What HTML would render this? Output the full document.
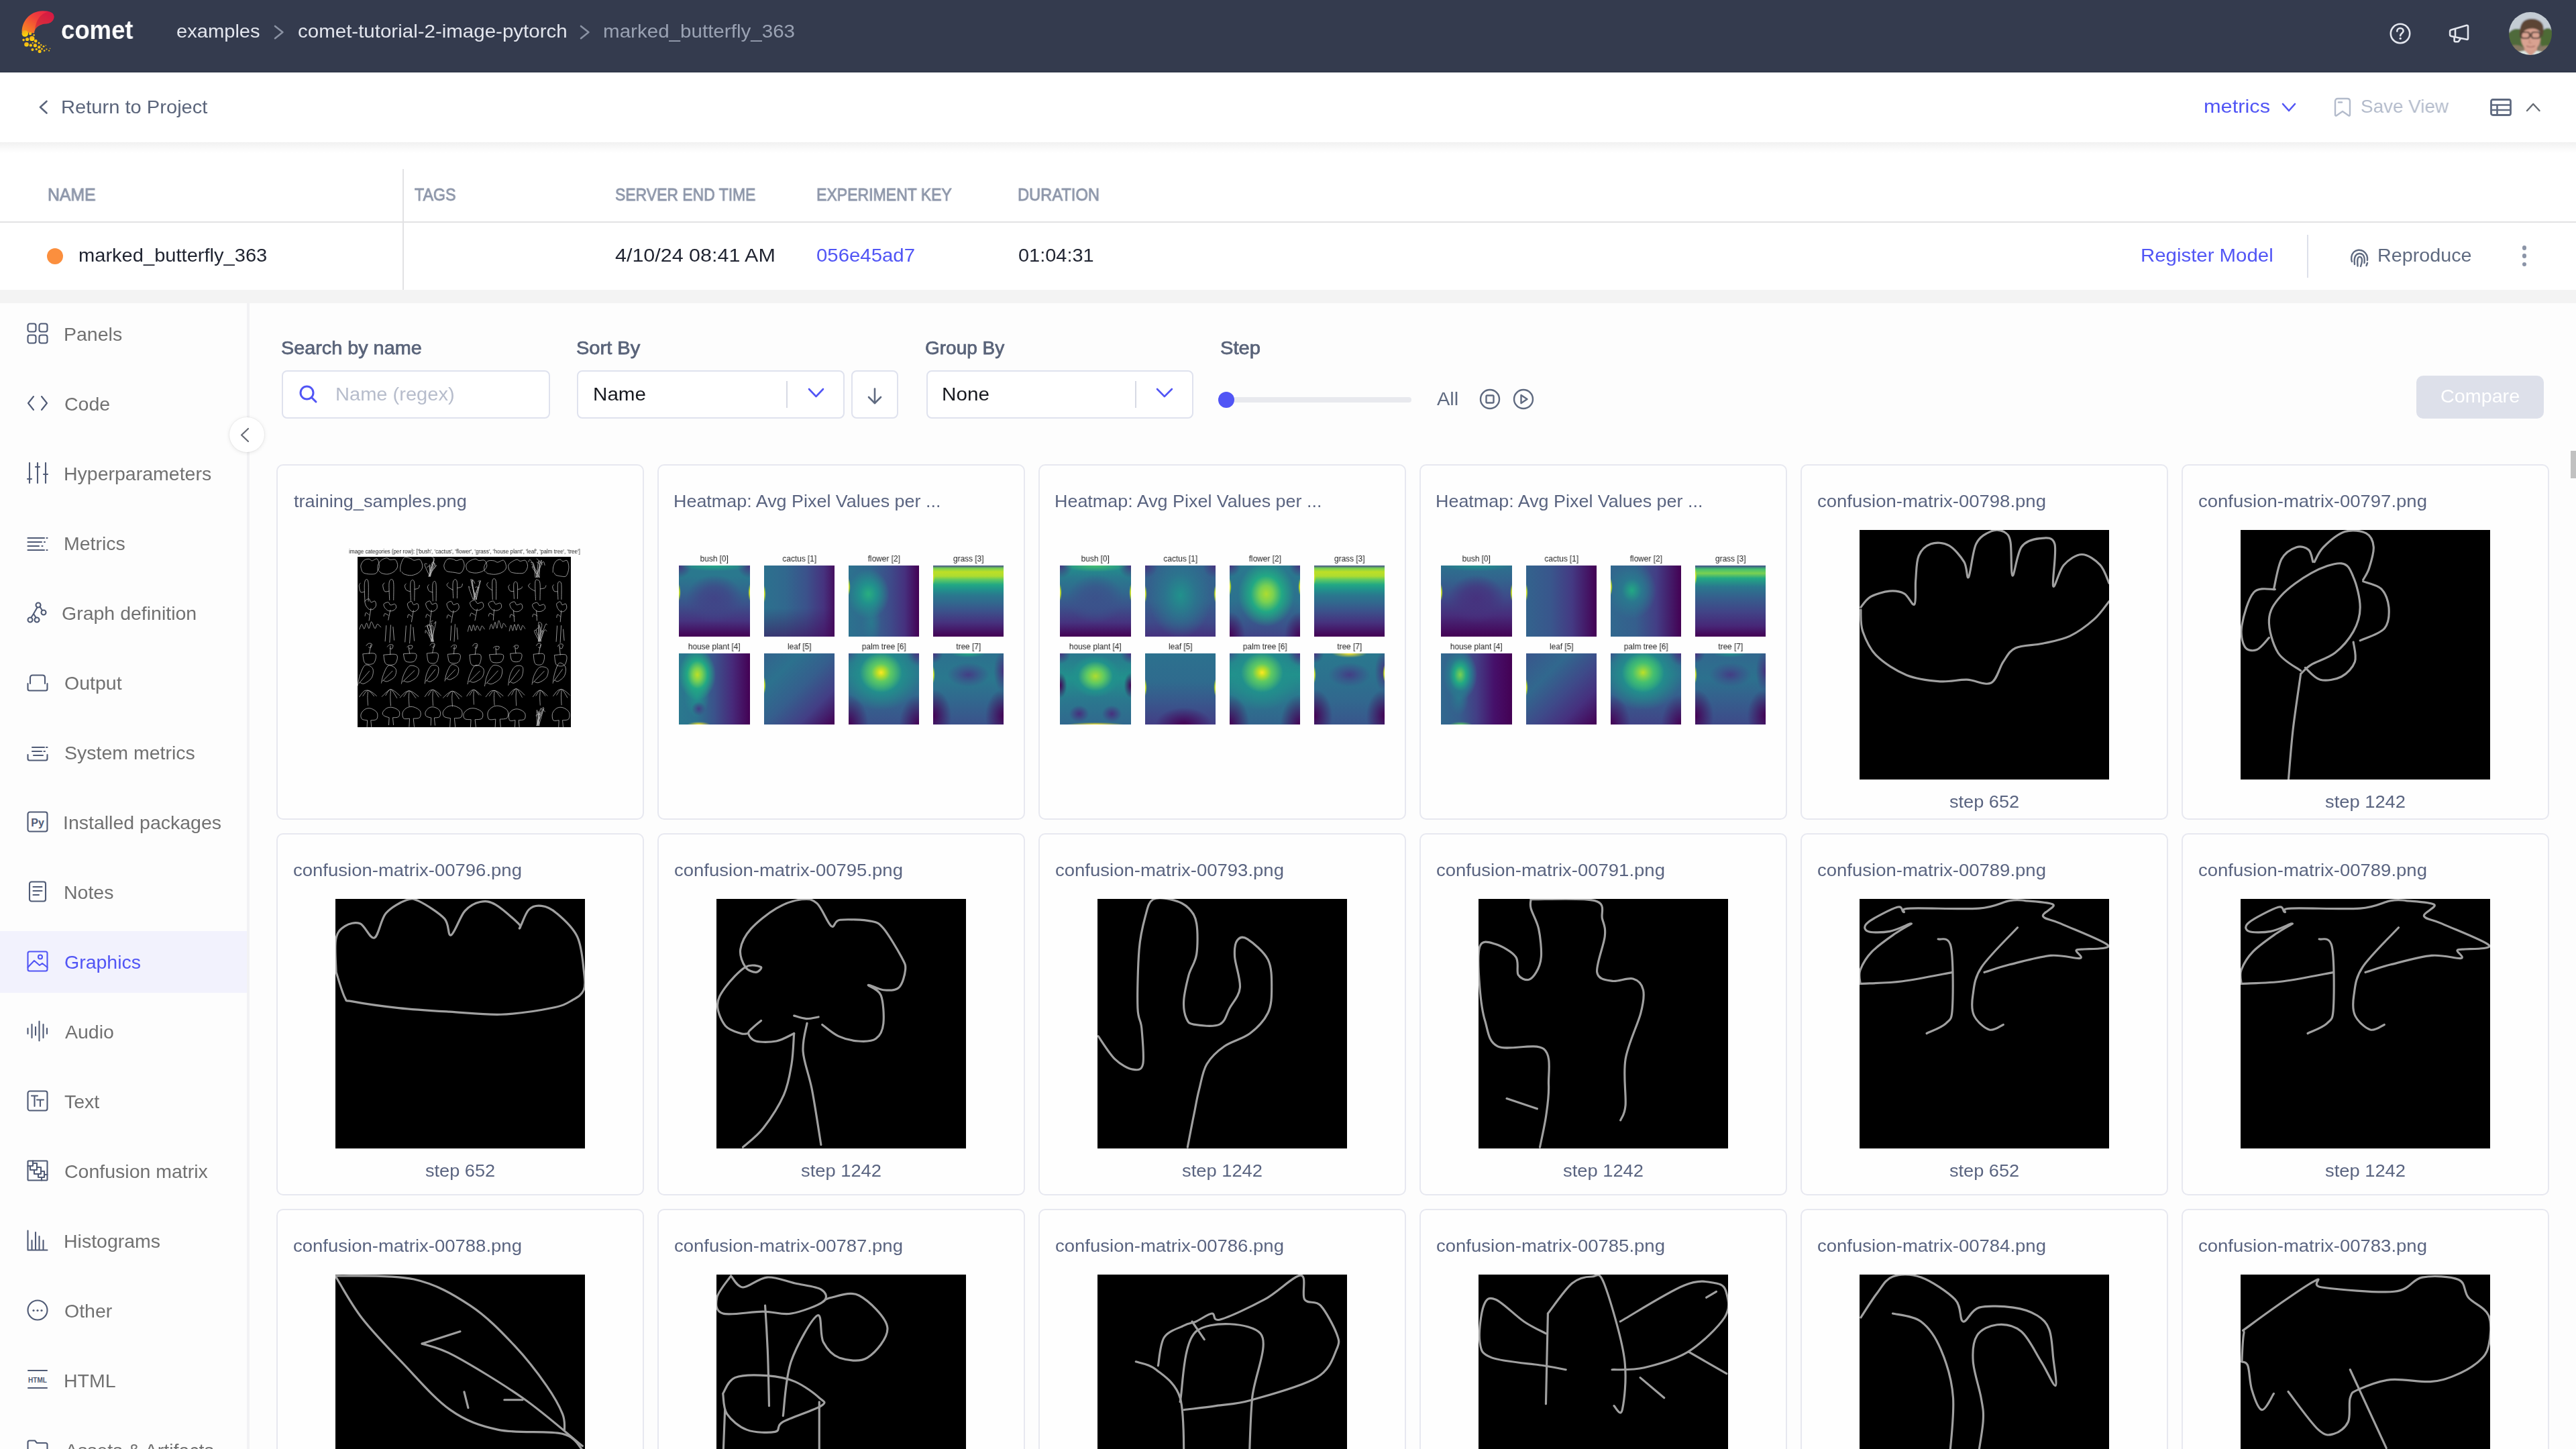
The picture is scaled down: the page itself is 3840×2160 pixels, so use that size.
<!DOCTYPE html>
<html><head><meta charset="utf-8"><style>
html,body{margin:0;padding:0;width:3840px;height:2160px;overflow:hidden;background:#fdfdfd;}
body{position:relative;font-family:"Liberation Sans",sans-serif;}
.t{position:absolute;white-space:nowrap;transform-origin:0 0;will-change:transform;}
svg{overflow:visible}
</style></head><body>
<div style="position:absolute;left:0;top:0;width:3840px;height:107px;background:#343b4e"></div>
<div style="position:absolute;left:0;top:107px;width:3840px;height:1px;background:#283042"></div>
<svg style="position:absolute;left:0.0px;top:0.0px;" width="120.0" height="100.0" viewBox="0 0 120 100"><defs><linearGradient id="lg1" x1="0" y1="1" x2="1" y2="0"><stop offset="0" stop-color="#f7931e"/><stop offset="0.55" stop-color="#f0423a"/><stop offset="1" stop-color="#e8194c"/></linearGradient><linearGradient id="lg2" x1="0" y1="0" x2="0.4" y2="1"><stop offset="0" stop-color="#f0a11f"/><stop offset="1" stop-color="#fdd80a"/></linearGradient></defs><path d="M32.6,48 C32.5,32 44,16.5 64,16.3 C74,16.2 80.5,19 80.5,25 C80.5,31 75,35 70,35.2 C60,35.5 51.5,40 51,49.5 Z" fill="url(#lg1)"/><path d="M64,16.3 C74,16.2 80.5,19 80.5,25 C80.5,31 75,35 70,35.2 C62,35.5 55,38 52,44 C54,30 60,20 72,17.5 Z" fill="#c41440" opacity="0.55"/><g fill="url(#lg2)"><circle cx="37.3" cy="50" r="4.8"/><circle cx="45" cy="50" r="2.2"/><circle cx="47.7" cy="57.4" r="3.7"/><circle cx="40.6" cy="58.5" r="2.6"/><circle cx="35.1" cy="59.6" r="1.8"/><circle cx="53.2" cy="61.1" r="2.4"/><circle cx="39.5" cy="66.3" r="3.3"/><circle cx="45.8" cy="67.4" r="2.2"/><circle cx="52.4" cy="67.7" r="2.6"/><circle cx="58.3" cy="70.3" r="2.2"/><circle cx="58" cy="64" r="1.5"/><circle cx="61.3" cy="67" r="1.2"/><circle cx="65" cy="69.2" r="1.4"/><circle cx="48.4" cy="74" r="2"/><circle cx="54.3" cy="73.3" r="1.6"/><circle cx="59.1" cy="76.6" r="2.5"/><circle cx="62.4" cy="72.9" r="1.4"/><circle cx="66.1" cy="75.5" r="1.3"/><circle cx="69.4" cy="73.3" r="1.1"/><circle cx="73.1" cy="75.5" r="1.1"/><circle cx="68.3" cy="67.7" r="0.7"/><circle cx="74.6" cy="72.2" r="0.7"/><circle cx="50.6" cy="52.2" r="1.3"/><circle cx="48.8" cy="64" r="1.1"/></g></svg>
<div class="t" style="left:91.1px;top:25.7px;font-size:38px;line-height:38px;color:#ffffff;font-weight:bold;transform:scaleX(0.9598);">comet</div>
<div class="t" style="left:262.8px;top:33.3px;font-size:28px;line-height:28px;color:#e3e6ee;transform:scaleX(1.0400);">examples</div>
<svg style="position:absolute;left:406.0px;top:34.8px;" width="19.4" height="26.2" viewBox="0 0 19.4 26.2"><polyline points="4.0,4.0 15.4,13.1 4.0,22.2" fill="none" stroke="#8a92a3" stroke-width="2.6" stroke-linecap="round" stroke-linejoin="round"/></svg>
<div class="t" style="left:443.5px;top:33.3px;font-size:28px;line-height:28px;color:#e3e6ee;transform:scaleX(1.0535);">comet-tutorial-2-image-pytorch</div>
<svg style="position:absolute;left:862.0px;top:34.8px;" width="19.4" height="26.2" viewBox="0 0 19.4 26.2"><polyline points="4.0,4.0 15.4,13.1 4.0,22.2" fill="none" stroke="#8a92a3" stroke-width="2.6" stroke-linecap="round" stroke-linejoin="round"/></svg>
<div class="t" style="left:898.8px;top:33.3px;font-size:28px;line-height:28px;color:#9aa2b3;transform:scaleX(1.0561);">marked_butterfly_363</div>
<svg style="position:absolute;left:3560.0px;top:32.0px;" width="36.0" height="36.0" viewBox="0 0 36 36"><circle cx="18" cy="18" r="14.2" fill="none" stroke="#e3e6ee" stroke-width="2.6"/><path d="M13.3,14.6 C13.3,11.6 15.5,10 18,10 C20.6,10 22.6,11.8 22.6,14.2 C22.6,17.5 18.2,17.6 18.2,21.2" fill="none" stroke="#e3e6ee" stroke-width="2.6" stroke-linecap="round"/><circle cx="18.2" cy="25.4" r="1.7" fill="#e3e6ee"/></svg>
<svg style="position:absolute;left:3650.0px;top:36.0px;" width="32.0" height="29.0" viewBox="0 0 32 29"><path d="M2.1,11 Q2.1,9 4,8.5 L27,1.8 Q29,1.3 29,3.3 V21.3 Q29,23.3 27,22.8 L4,18 Q2.1,17.6 2.1,15.6 Z" fill="none" stroke="#e3e6ee" stroke-width="2.6" stroke-linejoin="round"/><path d="M8.6,19.5 V24.5 Q8.6,26.2 10.5,26.2 H13.5 Q14.8,26.2 15.5,25 L18,21.2" fill="none" stroke="#e3e6ee" stroke-width="2.6" stroke-linejoin="round"/><path d="M10,6.6 V19.6" stroke="#e3e6ee" stroke-width="2.6"/></svg>
<svg style="position:absolute;left:3740.0px;top:18.0px;" width="64.0" height="64.0" viewBox="0 0 64 64"><defs><clipPath id="avc"><circle cx="32" cy="32" r="32"/></clipPath><filter id="avb" x="-10%" y="-10%" width="120%" height="120%"><feGaussianBlur stdDeviation="1.2"/></filter></defs><g clip-path="url(#avc)"><g filter="url(#avb)"><rect x="-4" y="-4" width="72" height="72" fill="#7a735f"/><rect x="-4" y="-4" width="72" height="34" fill="#c4ccd4"/><ellipse cx="12" cy="40" rx="15" ry="15" fill="#506b3a"/><ellipse cx="58" cy="40" rx="12" ry="16" fill="#4d6a36"/><ellipse cx="10" cy="58" rx="14" ry="9" fill="#857862"/><ellipse cx="56" cy="58" rx="12" ry="8" fill="#8a7a66"/><ellipse cx="32" cy="71" rx="30" ry="14" fill="#dbe7e2"/><path d="M23,50 H42 V57 L32.5,66 L23,57 Z" fill="#d39c8a"/><ellipse cx="32.5" cy="39" rx="14.5" ry="18.5" fill="#d9a291"/><path d="M16.5,38 C15,26 17,14 27,11 C36,8.5 47,11 50.5,19 C52.5,24 51.5,33 49.5,38 C48,30 44,25 36,24.5 C28,24 20,27 19,36 Z" fill="#5c4535"/><g fill="none" stroke="#4b3b31" stroke-width="2.2"><rect x="18" y="30" width="13" height="9" rx="3.5"/><rect x="33.5" y="30" width="13" height="9" rx="3.5"/></g><path d="M26,50.5 Q32.5,53.5 39,50.5" stroke="#a86f66" stroke-width="1.6" fill="none"/><path d="M31,41 L30,46 L34,46" stroke="#b9806f" stroke-width="1.2" fill="none"/></g></g></svg>
<div style="position:absolute;left:0;top:108px;width:3840px;height:324px;background:#ffffff"></div>
<svg style="position:absolute;left:55.5px;top:147.0px;" width="17.5" height="25.5" viewBox="0 0 17.5 25.5"><polyline points="13.5,4.0 4.0,12.8 13.5,21.5" fill="none" stroke="#5b657b" stroke-width="2.6" stroke-linecap="round" stroke-linejoin="round"/></svg>
<div class="t" style="left:90.6px;top:145.7px;font-size:28px;line-height:28px;color:#5b657b;transform:scaleX(1.0397);">Return to Project</div>
<div class="t" style="left:3284.8px;top:145.0px;font-size:28px;line-height:28px;color:#5155f5;transform:scaleX(1.0978);">metrics</div>
<svg style="position:absolute;left:3399.0px;top:150.5px;" width="26.0" height="18.0" viewBox="0 0 26 18"><polyline points="4.0,4.0 13.0,14.0 22.0,4.0" fill="none" stroke="#5155f5" stroke-width="2.6" stroke-linecap="round" stroke-linejoin="round"/></svg>
<svg style="position:absolute;left:3479.0px;top:145.0px;" width="27.0" height="30.0" viewBox="0 0 27 30"><path d="M2,6 C2,3.5 3.5,2 6,2 L20,2 C22.5,2 24,3.5 24,6 L24,26 C24,27.5 23,28 22,27.2 L13,21 L4,27.2 C3,28 2,27.5 2,26 Z" fill="none" stroke="#b3bbcb" stroke-width="2.4" stroke-linejoin="round"/><path d="M7,7.5 L12,7.5" stroke="#b3bbcb" stroke-width="2.4" stroke-linecap="round"/></svg>
<div class="t" style="left:3519.1px;top:145.0px;font-size:28px;line-height:28px;color:#b3bbcb;transform:scaleX(0.9946);">Save View</div>
<svg style="position:absolute;left:3712.0px;top:147.0px;" width="33.0" height="27.0" viewBox="0 0 33 27"><rect x="1.5" y="1.5" width="29" height="23" rx="2.5" fill="none" stroke="#5f6a80" stroke-width="2.8"/><path d="M1.5,9.5 L30.5,9.5 M1.5,17 L30.5,17 M10.5,9.5 L10.5,24.5" stroke="#5f6a80" stroke-width="2.6"/></svg>
<svg style="position:absolute;left:3762.5px;top:151.0px;" width="26.5" height="18.0" viewBox="0 0 26.5 18"><polyline points="4.0,14.0 13.2,4.0 22.5,14.0" fill="none" stroke="#666b73" stroke-width="2.4" stroke-linecap="round" stroke-linejoin="round"/></svg>
<div style="position:absolute;left:0;top:212px;width:3840px;height:16px;background:linear-gradient(#f1f1f1,#fafafa 60%,#ffffff)"></div>
<div class="t" style="left:70.6px;top:277.8px;font-size:25px;line-height:25px;color:#8e97aa;transform:scaleX(0.9921);-webkit-text-stroke:0.85px #8e97aa;">NAME</div>
<div class="t" style="left:618.0px;top:277.8px;font-size:25px;line-height:25px;color:#8e97aa;transform:scaleX(0.9302);-webkit-text-stroke:0.85px #8e97aa;">TAGS</div>
<div class="t" style="left:916.9px;top:277.8px;font-size:25px;line-height:25px;color:#8e97aa;transform:scaleX(0.9177);-webkit-text-stroke:0.85px #8e97aa;">SERVER END TIME</div>
<div class="t" style="left:1216.7px;top:277.8px;font-size:25px;line-height:25px;color:#8e97aa;transform:scaleX(0.9216);-webkit-text-stroke:0.85px #8e97aa;">EXPERIMENT KEY</div>
<div class="t" style="left:1516.9px;top:277.8px;font-size:25px;line-height:25px;color:#8e97aa;transform:scaleX(0.9475);-webkit-text-stroke:0.85px #8e97aa;">DURATION</div>
<div style="position:absolute;left:0;top:330px;width:3840px;height:2px;background:#e2e2e4"></div>
<div style="position:absolute;left:600px;top:252px;width:2px;height:180px;background:#e2e2e4"></div>
<div style="position:absolute;left:70px;top:370px;width:24px;height:24px;border-radius:50%;background:#fb8f3e"></div>
<div class="t" style="left:117.0px;top:367.2px;font-size:28px;line-height:28px;color:#1f2330;transform:scaleX(1.0386);">marked_butterfly_363</div>
<div class="t" style="left:917.4px;top:367.2px;font-size:28px;line-height:28px;color:#1f2330;transform:scaleX(1.0880);">4/10/24 08:41 AM</div>
<div class="t" style="left:1217.3px;top:367.2px;font-size:28px;line-height:28px;color:#5155f5;transform:scaleX(1.0489);">056e45ad7</div>
<div class="t" style="left:1517.6px;top:367.2px;font-size:28px;line-height:28px;color:#1f2330;transform:scaleX(1.0330);">01:04:31</div>
<div class="t" style="left:3190.6px;top:367.2px;font-size:28px;line-height:28px;color:#5155f5;transform:scaleX(1.0497);">Register Model</div>
<div style="position:absolute;left:3439px;top:350px;width:2px;height:64px;background:#dde0ea"></div>
<svg style="position:absolute;left:3502.0px;top:367.5px;" width="30.0" height="31.0" viewBox="0 0 30 31"><g fill="none" stroke="#5f6a80" stroke-width="2.4" stroke-linecap="round"><path d="M4,22 C2.5,18 2.8,12 6.5,8 C10,4.5 16.5,3.5 21,6.5 C25.5,9.5 27.5,14.5 27,20"/><path d="M8,26 C7.5,22 7,17 9.5,13 C12,9.5 17.5,9 20.5,12 C23,14.5 23,19 22.5,24"/><path d="M12.5,28.5 C12.5,25 11.5,20 13,16.5 C14.5,14 17.5,14.5 18.5,17 C19.5,20 18.5,25 17,29"/><path d="M27,24 C26.5,25.5 26,27 25.5,28"/></g></svg>
<div class="t" style="left:3543.7px;top:367.2px;font-size:28px;line-height:28px;color:#5f6a80;transform:scaleX(1.0258);">Reproduce</div>
<div style="position:absolute;left:3759.6px;top:366.1px;width:6.8px;height:6.8px;border-radius:50%;background:#8b94a7"></div>
<div style="position:absolute;left:3759.6px;top:378.3px;width:6.8px;height:6.8px;border-radius:50%;background:#8b94a7"></div>
<div style="position:absolute;left:3759.6px;top:390.6px;width:6.8px;height:6.8px;border-radius:50%;background:#8b94a7"></div>
<div style="position:absolute;left:0;top:432px;width:3840px;height:20px;background:#f3f3f3"></div>
<div style="position:absolute;left:0;top:452px;width:368px;height:1708px;background:#fdfdfd"></div>
<div style="position:absolute;left:368px;top:452px;width:4px;height:1708px;background:#f2f2f4"></div>
<div class="t" style="left:94.7px;top:484.4px;font-size:28.5px;line-height:28.5px;color:#717171;">Panels</div>
<svg style="position:absolute;left:40.0px;top:481.1px;" width="32.0" height="32.0" viewBox="0 0 32 32"><g fill="none" stroke="#4f5a75" stroke-width="2.1" stroke-linecap="round" stroke-linejoin="round"><rect x="1.5" y="1.5" width="12" height="12" rx="3"/><rect x="18.5" y="1.5" width="12" height="12" rx="3"/><rect x="1.5" y="18.5" width="12" height="12" rx="3"/><rect x="18.5" y="18.5" width="12" height="12" rx="3"/></g></svg>
<div class="t" style="left:95.6px;top:588.4px;font-size:28.5px;line-height:28.5px;color:#717171;">Code</div>
<svg style="position:absolute;left:40.0px;top:585.1px;" width="32.0" height="32.0" viewBox="0 0 32 32"><g fill="none" stroke="#4f5a75" stroke-width="2.1" stroke-linecap="round" stroke-linejoin="round"><polyline points="10,6 2,16 10,26"/><polyline points="22,6 30,16 22,26"/></g></svg>
<div class="t" style="left:94.7px;top:692.4px;font-size:28.5px;line-height:28.5px;color:#717171;">Hyperparameters</div>
<svg style="position:absolute;left:40.0px;top:689.1px;" width="32.0" height="32.0" viewBox="0 0 32 32"><g fill="none" stroke="#4f5a75" stroke-width="2.1" stroke-linecap="round" stroke-linejoin="round"><path d="M4,1 L4,31 M16,1 L16,31 M28,1 L28,31 M1,25 L7,25 M13,7 L19,7 M25,18 L31,18"/></g></svg>
<div class="t" style="left:94.7px;top:796.4px;font-size:28.5px;line-height:28.5px;color:#717171;">Metrics</div>
<svg style="position:absolute;left:40.0px;top:793.1px;" width="32.0" height="32.0" viewBox="0 0 32 32"><g fill="none" stroke="#4f5a75" stroke-width="2.1" stroke-linecap="round" stroke-linejoin="round"><path d="M1.5,9 L26,9 M1.5,15 L22,15 M1.5,21 L18,21 M1.5,27 L26,27 M29.5,9 L30.5,9 M26,15 L27,15 M22.5,21 L23.5,21 M29.5,27 L30.5,27"/></g></svg>
<div class="t" style="left:91.6px;top:900.4px;font-size:28.5px;line-height:28.5px;color:#717171;">Graph definition</div>
<svg style="position:absolute;left:40.0px;top:897.1px;" width="32.0" height="32.0" viewBox="0 0 32 32"><g fill="none" stroke="#4f5a75" stroke-width="2.1" stroke-linecap="round" stroke-linejoin="round" stroke-width="2.2"><circle cx="17" cy="5" r="3.5"/><circle cx="25" cy="16" r="3.5"/><circle cx="5" cy="27" r="3.5"/><circle cx="15" cy="27" r="3.5"/><path d="M15.5,8.5 L10,18 L6.5,23.5 M10,18 L13.5,23.5 M19.5,7.5 L23,13"/></g></svg>
<div class="t" style="left:95.6px;top:1004.4px;font-size:28.5px;line-height:28.5px;color:#717171;">Output</div>
<svg style="position:absolute;left:40.0px;top:1001.1px;" width="32.0" height="32.0" viewBox="0 0 32 32"><g fill="none" stroke="#4f5a75" stroke-width="2.1" stroke-linecap="round" stroke-linejoin="round"><path d="M5,18 L5,9 C5,7 6.5,5.5 8.5,5.5 L23.5,5.5 C25.5,5.5 27,7 27,9 L27,18"/><path d="M1.5,18 L1.5,26 C1.5,27.5 2.5,28.5 4,28.5 L28,28.5 C29.5,28.5 30.5,27.5 30.5,26 L30.5,18"/></g></svg>
<div class="t" style="left:95.6px;top:1108.4px;font-size:28.5px;line-height:28.5px;color:#717171;">System metrics</div>
<svg style="position:absolute;left:40.0px;top:1105.1px;" width="32.0" height="32.0" viewBox="0 0 32 32"><g fill="none" stroke="#4f5a75" stroke-width="2.1" stroke-linecap="round" stroke-linejoin="round"><path d="M8,9 L26,9 M8,15 L22,15 M1.5,20 L1.5,26 C1.5,27.5 2.5,28.5 4,28.5 L28,28.5 C29.5,28.5 30.5,27.5 30.5,26 L30.5,20 M10,21 L24,21 M29,9 L30.5,9 M25.5,15 L27,15"/></g></svg>
<div class="t" style="left:94.4px;top:1212.4px;font-size:28.5px;line-height:28.5px;color:#717171;">Installed packages</div>
<svg style="position:absolute;left:40.0px;top:1209.1px;" width="32.0" height="32.0" viewBox="0 0 32 32"><g fill="none" stroke="#4f5a75" stroke-width="2.1" stroke-linecap="round" stroke-linejoin="round"><rect x="1.5" y="1.5" width="29" height="29" rx="3"/></g><text x="16" y="22.5" text-anchor="middle" font-family="Liberation Sans" font-weight="bold" font-size="16" fill="#4f5a75">Py</text></svg>
<div class="t" style="left:94.7px;top:1316.4px;font-size:28.5px;line-height:28.5px;color:#717171;">Notes</div>
<svg style="position:absolute;left:40.0px;top:1313.1px;" width="32.0" height="32.0" viewBox="0 0 32 32"><g fill="none" stroke="#4f5a75" stroke-width="2.1" stroke-linecap="round" stroke-linejoin="round"><rect x="4" y="1.5" width="24" height="29" rx="3"/><path d="M9.5,9 L22.5,9 M9.5,15 L22.5,15 M9.5,21 L18,21"/></g></svg>
<div style="position:absolute;left:0;top:1388px;width:368px;height:92px;background:#f2f2fd"></div>
<div class="t" style="left:95.6px;top:1420.4px;font-size:28.5px;line-height:28.5px;color:#5155f5;">Graphics</div>
<svg style="position:absolute;left:40.0px;top:1417.1px;" width="32.0" height="32.0" viewBox="0 0 32 32"><g fill="none" stroke="#5155f5" stroke-width="2.1" stroke-linecap="round" stroke-linejoin="round"><rect x="1.5" y="1.5" width="29" height="29" rx="2.5"/><path d="M1.5,25 L11,15 L19,22 L23,19 L30.5,25"/><circle cx="20" cy="9.5" r="3"/></g></svg>
<div class="t" style="left:97.0px;top:1524.4px;font-size:28.5px;line-height:28.5px;color:#717171;">Audio</div>
<svg style="position:absolute;left:40.0px;top:1521.1px;" width="32.0" height="32.0" viewBox="0 0 32 32"><g fill="none" stroke="#4f5a75" stroke-width="2.1" stroke-linecap="round" stroke-linejoin="round"><path d="M1.5,12 L1.5,20 M7.5,6 L7.5,26 M13,10 L13,22 M18.5,1.5 L18.5,30.5 M24.5,6 L24.5,26 M30,12 L30,20"/></g></svg>
<div class="t" style="left:96.4px;top:1628.4px;font-size:28.5px;line-height:28.5px;color:#717171;">Text</div>
<svg style="position:absolute;left:40.0px;top:1625.1px;" width="32.0" height="32.0" viewBox="0 0 32 32"><g fill="none" stroke="#4f5a75" stroke-width="2.1" stroke-linecap="round" stroke-linejoin="round"><rect x="1.5" y="1.5" width="29" height="29" rx="3"/><path d="M7,8.5 L16,8.5 M11.5,8.5 L11.5,24 M15,14.5 L25,14.5 M20,14.5 L20,24"/></g></svg>
<div class="t" style="left:95.6px;top:1732.4px;font-size:28.5px;line-height:28.5px;color:#717171;">Confusion matrix</div>
<svg style="position:absolute;left:40.0px;top:1729.1px;" width="32.0" height="32.0" viewBox="0 0 32 32"><g fill="none" stroke="#4f5a75" stroke-width="2.1" stroke-linecap="round" stroke-linejoin="round" stroke-width="2.1"><rect x="1.5" y="1.5" width="29" height="29" rx="1"/><path d="M1.5,9 H9 V1.5 M5,9 V15 H15 V5 H9 M11,15 V21 H21 V11 H15 M17,21 V26 H26 V17 H21 M22,26 V30.5 M26,22 H30.5"/></g></svg>
<div class="t" style="left:94.7px;top:1836.4px;font-size:28.5px;line-height:28.5px;color:#717171;">Histograms</div>
<svg style="position:absolute;left:40.0px;top:1833.1px;" width="32.0" height="32.0" viewBox="0 0 32 32"><g fill="none" stroke="#4f5a75" stroke-width="2.1" stroke-linecap="round" stroke-linejoin="round"><path d="M1.5,1.5 L1.5,30.5 L30.5,30.5 M7.5,30.5 L7.5,16 M13,30.5 L13,4 M18.5,30.5 L18.5,10 M24.5,30.5 L24.5,16"/></g></svg>
<div class="t" style="left:95.6px;top:1940.4px;font-size:28.5px;line-height:28.5px;color:#717171;">Other</div>
<svg style="position:absolute;left:40.0px;top:1937.1px;" width="32.0" height="32.0" viewBox="0 0 32 32"><g fill="none" stroke="#4f5a75" stroke-width="2.1" stroke-linecap="round" stroke-linejoin="round"><circle cx="16" cy="16" r="14.5"/></g><g fill="#4f5a75"><circle cx="10" cy="16.5" r="1.6"/><circle cx="16" cy="16.5" r="1.6"/><circle cx="22" cy="16.5" r="1.6"/></g></svg>
<div class="t" style="left:94.7px;top:2044.4px;font-size:28.5px;line-height:28.5px;color:#717171;">HTML</div>
<svg style="position:absolute;left:40.0px;top:2041.1px;" width="32.0" height="32.0" viewBox="0 0 32 32"><g fill="none" stroke="#4f5a75" stroke-width="2.1" stroke-linecap="round" stroke-linejoin="round"><path d="M2,2 L30,2 M2,28 L30,28"/></g><text x="16" y="19.5" text-anchor="middle" font-family="Liberation Sans" font-weight="bold" font-size="10" fill="#4f5a75">HTML</text></svg>
<div class="t" style="left:97.0px;top:2148.4px;font-size:28.5px;line-height:28.5px;color:#717171;">Assets &amp; Artifacts</div>
<svg style="position:absolute;left:40.0px;top:2145.1px;" width="32.0" height="32.0" viewBox="0 0 32 32"><g fill="none" stroke="#4f5a75" stroke-width="2.1" stroke-linecap="round" stroke-linejoin="round"><path d="M1.5,28 L1.5,5 C1.5,3.5 2.5,2.5 4,2.5 L12,2.5 L15,6 L28,6 C29.5,6 30.5,7 30.5,8.5 L30.5,28"/></g></svg>
<div style="position:absolute;left:342px;top:622px;width:52px;height:52px;border-radius:50%;background:#fff;box-shadow:0 1px 6px rgba(0,0,0,0.10), 0 0 0 1px rgba(0,0,0,0.03)"></div>
<svg style="position:absolute;left:356.0px;top:634.5px;" width="18.0" height="27.0" viewBox="0 0 18 27"><polyline points="14.0,4.0 4.0,13.5 14.0,23.0" fill="none" stroke="#666a73" stroke-width="2.2" stroke-linecap="round" stroke-linejoin="round"/></svg>
<div style="position:absolute;left:372px;top:452px;width:3468px;height:1708px;background:#fdfdfd;z-index:-1"></div>
<div class="t" style="left:419.0px;top:505.2px;font-size:28px;line-height:28px;color:#596379;transform:scaleX(1.0282);-webkit-text-stroke:0.75px #596379;">Search by name</div>
<div class="t" style="left:858.8px;top:505.2px;font-size:28px;line-height:28px;color:#596379;transform:scaleX(1.0372);-webkit-text-stroke:0.75px #596379;">Sort By</div>
<div class="t" style="left:1379.2px;top:505.2px;font-size:28px;line-height:28px;color:#596379;-webkit-text-stroke:0.75px #596379;">Group By</div>
<div class="t" style="left:1819.0px;top:505.2px;font-size:28px;line-height:28px;color:#596379;transform:scaleX(1.0424);-webkit-text-stroke:0.75px #596379;">Step</div>
<div style="position:absolute;left:420px;top:552px;width:400px;height:72px;box-sizing:border-box;border:2px solid #dfe2ee;border-radius:8px;background:#fff"></div>
<svg style="position:absolute;left:446.0px;top:574.0px;" width="28.0" height="28.0" viewBox="0 0 28 28"><circle cx="11.5" cy="11.5" r="9.5" fill="none" stroke="#5155f5" stroke-width="3"/><path d="M18.5,18.5 L25,25" stroke="#5155f5" stroke-width="3" stroke-linecap="round"/></svg>
<div class="t" style="left:500.4px;top:573.7px;font-size:28px;line-height:28px;color:#b7bdcc;transform:scaleX(1.0379);">Name (regex)</div>
<div style="position:absolute;left:860px;top:552px;width:399px;height:72px;box-sizing:border-box;border:2px solid #dfe2ee;border-radius:8px;background:#fff"></div>
<div class="t" style="left:884.4px;top:573.7px;font-size:28px;line-height:28px;color:#17191f;transform:scaleX(1.0574);">Name</div>
<div style="position:absolute;left:1172px;top:568px;width:2px;height:40px;background:#d7dae4"></div>
<svg style="position:absolute;left:1201.6px;top:576.0px;" width="29.0" height="19.0" viewBox="0 0 29 19"><polyline points="4.0,4.0 14.5,15.0 25.0,4.0" fill="none" stroke="#5155f5" stroke-width="2.6" stroke-linecap="round" stroke-linejoin="round"/></svg>
<div style="position:absolute;left:1269px;top:552px;width:70px;height:72px;box-sizing:border-box;border:2px solid #dfe2ee;border-radius:8px;background:#fff"></div>
<svg style="position:absolute;left:1292.0px;top:578.0px;" width="24.0" height="26.0" viewBox="0 0 24 26"><path d="M12,1.5 L12,23" stroke="#5f6a80" stroke-width="2.6" stroke-linecap="round"/><polyline points="3,14 12,23 21,14" fill="none" stroke="#5f6a80" stroke-width="2.6" stroke-linecap="round" stroke-linejoin="round"/></svg>
<div style="position:absolute;left:1381px;top:552px;width:398px;height:72px;box-sizing:border-box;border:2px solid #dfe2ee;border-radius:8px;background:#fff"></div>
<div class="t" style="left:1404.3px;top:573.7px;font-size:28px;line-height:28px;color:#17191f;transform:scaleX(1.0588);">None</div>
<div style="position:absolute;left:1692px;top:568px;width:2px;height:40px;background:#d7dae4"></div>
<svg style="position:absolute;left:1721.0px;top:576.0px;" width="29.9" height="19.0" viewBox="0 0 29.9 19"><polyline points="4.0,4.0 14.9,15.0 25.9,4.0" fill="none" stroke="#5155f5" stroke-width="2.6" stroke-linecap="round" stroke-linejoin="round"/></svg>
<div style="position:absolute;left:1828px;top:592px;width:276px;height:8px;border-radius:4px;background:#e8e9ee"></div>
<div style="position:absolute;left:1816px;top:584px;width:24px;height:24px;border-radius:50%;background:#5155f5"></div>
<div class="t" style="left:2142.0px;top:581.2px;font-size:28px;line-height:28px;color:#5f6a80;transform:scaleX(1.0374);">All</div>
<svg style="position:absolute;left:2205.0px;top:579.0px;" width="32.0" height="32.0" viewBox="0 0 32 32"><circle cx="16" cy="16" r="14" fill="none" stroke="#5f6a80" stroke-width="2.4"/><rect x="10.5" y="10.5" width="11" height="11" rx="1.5" fill="none" stroke="#5f6a80" stroke-width="2.4"/></svg>
<svg style="position:absolute;left:2255.0px;top:579.0px;" width="32.0" height="32.0" viewBox="0 0 32 32"><circle cx="16" cy="16" r="14" fill="none" stroke="#5f6a80" stroke-width="2.4"/><path d="M12.5,10 L21.5,16 L12.5,22 Z" fill="none" stroke="#5f6a80" stroke-width="2.4" stroke-linejoin="round"/></svg>
<div style="position:absolute;left:3602px;top:560px;width:190px;height:64px;border-radius:10px;background:#dde0ea"></div>
<div class="t" style="left:3638.1px;top:577.4px;font-size:28px;line-height:28px;color:#ffffff;transform:scaleX(1.0261);">Compare</div>
<div style="position:absolute;left:3832px;top:672px;width:8px;height:41px;background:#c1c1c1"></div>
<div style="position:absolute;left:412px;top:692px;width:548px;height:530px;box-sizing:border-box;border:2px solid #e7e8f0;border-radius:10px;background:#fefefe"></div>
<div class="t" style="left:437.9px;top:733.9px;font-size:26px;line-height:26px;color:#5a6480;transform:scaleX(1.0429);">training_samples.png</div>
<svg style="position:absolute;left:533.3px;top:829.8px;overflow:hidden" width="318.0" height="254.2" viewBox="0 0 318 254.2"><rect width="318" height="254.2" fill="#000"/><g fill="none" stroke="#cfcfcf" stroke-width="0.8" opacity="0.9"><path d="M6.4,21.1C6.2,19.7 4.4,15.6 4.9,13.0C5.4,10.4 7.4,7.0 9.5,5.4C11.5,3.7 15.0,3.2 17.1,3.3C19.1,3.4 19.6,5.9 21.6,5.9C23.7,5.9 27.5,1.8 29.3,3.3C31.0,4.7 32.6,11.1 32.3,14.6C32.1,18.1 30.0,22.5 27.7,24.4C25.5,26.3 21.6,25.9 18.6,25.9C15.6,25.9 11.5,25.1 9.5,24.3C7.4,23.5 6.9,21.6 6.4,21.1"/><path d="M30.0,20.7C30.1,19.3 29.6,14.7 30.5,12.1C31.4,9.5 33.2,6.9 35.4,5.2C37.5,3.4 41.3,1.8 43.5,1.7C45.7,1.6 46.2,4.0 48.4,4.5C50.5,5.0 54.6,3.0 56.5,4.5C58.4,6.1 60.0,11.0 59.7,13.8C59.5,16.7 57.3,19.6 54.9,21.7C52.4,23.7 48.4,25.5 45.1,25.9C41.9,26.3 37.5,25.1 35.4,24.2C33.2,23.3 32.7,21.3 32.1,20.7"/><path d="M63.9,22.3C64.0,20.8 63.2,16.7 64.1,13.2C65.1,9.7 67.1,3.2 69.6,1.4C72.0,-0.5 76.2,1.7 78.7,2.4C81.1,3.0 81.7,4.9 84.1,5.3C86.5,5.6 91.1,2.7 93.2,4.3C95.3,6.0 97.1,11.9 96.8,15.0C96.5,18.2 94.1,21.2 91.4,23.3C88.7,25.5 84.1,27.3 80.5,27.7C76.8,28.1 72.0,26.8 69.6,25.9C67.1,25.0 66.5,22.9 65.9,22.3"/><path d="M108.4,29.4C108.2,26.7 107.1,15.7 107.2,12.9C107.2,10.2 108.5,12.9 108.7,12.9M107.1,29.4C107.8,25.9 109.8,10.9 111.4,8.4C113.1,5.9 116.0,13.2 116.9,14.2M107.3,29.4C108.6,26.4 114.1,14.7 114.9,11.3C115.6,7.9 112.4,9.3 111.9,8.8M107.8,29.4C106.5,26.5 100.7,15.1 100.0,12.0C99.4,8.9 103.2,10.9 103.8,10.7M105.6,29.4C107.5,26.7 115.7,14.9 117.1,13.0C118.5,11.0 114.5,17.0 113.9,17.8M107.7,29.4C107.7,26.9 108.5,16.7 107.7,14.5C106.9,12.3 103.8,15.8 103.0,16.0M106.0,29.4C107.3,25.5 112.7,9.1 113.7,6.2C114.7,3.2 112.1,10.7 111.8,11.6M106.9,29.4C108.0,25.2 113.0,9.4 113.3,4.4C113.6,-0.6 109.6,0.1 108.9,-0.8M108.6,29.4C109.5,25.4 113.2,9.8 114.0,5.1C114.8,0.5 113.6,2.1 113.5,1.5"/><path d="M130.2,19.0C129.9,17.8 128.3,14.5 128.9,12.0C129.5,9.4 131.7,5.0 133.9,3.6C136.2,2.2 140.1,3.1 142.3,3.5C144.6,3.8 145.1,5.7 147.4,5.7C149.6,5.8 153.8,2.6 155.8,3.8C157.7,5.1 159.4,10.0 159.1,13.4C158.8,16.7 156.6,22.3 154.1,24.0C151.6,25.6 147.4,23.6 144.0,23.3C140.7,22.9 136.2,22.6 133.9,21.8C131.7,21.1 131.1,19.5 130.6,19.0"/><path d="M163.0,19.7C162.8,18.4 161.2,14.4 161.9,12.2C162.5,10.0 164.7,7.9 167.0,6.4C169.3,4.9 173.3,3.3 175.6,3.2C177.9,3.1 178.5,5.2 180.8,5.6C183.1,6.0 187.4,4.0 189.4,5.4C191.4,6.7 193.1,11.1 192.8,13.7C192.5,16.2 190.2,19.0 187.7,20.7C185.1,22.5 180.8,23.8 177.3,24.1C173.9,24.5 169.3,23.4 167.0,22.6C164.7,21.9 164.2,20.2 163.6,19.7"/><path d="M189.6,21.8C189.4,20.6 188.0,17.2 188.8,14.6C189.5,12.0 191.8,7.8 194.2,6.4C196.7,4.9 200.9,5.6 203.3,5.9C205.8,6.2 206.4,8.3 208.8,8.2C211.2,8.1 215.8,4.0 217.9,5.3C220.0,6.7 221.9,13.1 221.6,16.0C221.3,19.0 218.8,21.2 216.1,22.8C213.4,24.5 208.8,25.9 205.2,26.2C201.5,26.5 196.7,25.5 194.2,24.8C191.8,24.0 191.2,22.3 190.6,21.8"/><path d="M226.1,20.2C225.9,19.0 224.2,15.0 224.8,12.9C225.3,10.8 227.4,9.2 229.6,7.7C231.7,6.3 235.4,4.3 237.5,4.1C239.7,3.9 240.2,6.2 242.3,6.5C244.5,6.7 248.5,4.2 250.3,5.5C252.2,6.8 253.8,11.4 253.5,14.4C253.2,17.4 251.1,21.8 248.7,23.5C246.3,25.2 242.3,24.7 239.1,24.6C236.0,24.6 231.7,23.9 229.6,23.2C227.4,22.4 226.9,20.7 226.4,20.2"/><path d="M265.9,31.0C267.6,27.2 273.7,11.0 275.9,8.0C278.1,5.0 278.7,12.2 279.3,13.0M270.8,31.0C269.1,28.5 262.1,18.7 260.6,16.0C259.2,13.4 261.9,15.3 262.1,15.1M271.3,31.0C269.2,26.8 261.1,9.4 258.4,5.6C255.6,1.7 255.3,7.5 254.7,7.9M268.8,31.0C267.7,28.3 263.7,17.9 262.1,14.6C260.5,11.2 259.7,11.5 259.2,10.9M266.2,31.0C267.4,26.8 272.2,9.4 273.5,5.9C274.9,2.4 274.2,9.3 274.3,10.0M271.0,31.0C271.0,27.2 271.6,13.0 270.9,8.3C270.2,3.6 267.4,3.7 266.8,2.8M265.0,31.0C264.6,27.5 263.6,13.9 262.4,10.2C261.2,6.5 258.6,9.0 257.9,8.7M267.1,31.0C267.6,26.9 268.5,9.8 269.9,6.6C271.2,3.5 274.4,11.2 275.4,12.2M268.7,31.0C269.2,28.0 272.3,16.9 272.0,13.1C271.7,9.2 267.7,8.6 266.9,7.7"/><path d="M291.2,23.6C291.3,22.1 291.1,17.6 291.8,14.7C292.6,11.9 294.0,8.3 295.7,6.6C297.4,4.8 300.4,4.0 302.1,4.0C303.8,4.1 304.2,6.6 305.9,6.9C307.7,7.1 310.9,4.1 312.4,5.7C313.8,7.3 315.1,12.7 314.9,16.5C314.7,20.3 313.0,26.4 311.1,28.5C309.1,30.6 305.9,29.2 303.4,29.0C300.8,28.8 297.4,28.1 295.7,27.2C294.0,26.3 293.5,24.2 293.1,23.6"/><path d="M10.9,66.6C10.8,62.3 9.9,46.1 10.3,40.6C10.7,35.1 12.2,33.9 13.2,33.7C14.2,33.5 15.6,33.7 16.1,39.2C16.6,44.7 16.1,62.0 16.1,66.6M10.6,52.0C9.6,52.1 5.9,54.0 4.5,52.5C3.1,51.0 2.2,45.1 2.2,42.8C2.2,40.6 4.1,39.8 4.5,39.2"/><path d="M47.7,64.8C47.6,60.7 46.6,45.1 47.0,39.9C47.5,34.7 49.2,33.9 50.3,33.7C51.4,33.5 53.1,33.7 53.7,38.9C54.2,44.1 53.7,60.5 53.7,64.8M47.3,51.0C46.2,51.1 42.0,52.9 40.4,51.5C38.7,50.0 37.7,44.4 37.7,42.3C37.7,40.2 39.9,39.5 40.4,38.9"/><path d="M79.4,65.7C79.3,61.5 78.4,45.7 78.8,40.5C79.2,35.3 80.8,34.7 81.8,34.6C82.8,34.5 84.3,34.6 84.8,39.8C85.3,45.0 84.8,61.4 84.8,65.7M79.1,51.9C78.1,51.5 74.2,51.0 72.8,49.5C71.3,48.1 70.4,44.9 70.4,43.3C70.4,41.6 72.4,40.4 72.8,39.8M84.8,48.4C85.8,48.2 89.6,47.8 90.8,46.7C92.1,45.7 92.1,42.9 92.3,42.1"/><path d="M112.3,66.3C112.2,62.3 111.5,47.6 111.8,42.6C112.2,37.7 113.6,36.7 114.4,36.5C115.3,36.3 116.6,36.5 117.1,41.4C117.5,46.4 117.1,62.1 117.1,66.3M112.1,53.0C111.1,52.6 107.8,52.2 106.5,50.8C105.3,49.4 104.4,46.3 104.4,44.7C104.4,43.2 106.2,42.0 106.5,41.4"/><path d="M142.7,62.0C142.6,58.3 141.6,44.5 142.1,39.9C142.5,35.2 144.2,34.1 145.3,33.9C146.3,33.7 147.9,33.9 148.4,38.6C149.0,43.3 148.4,58.1 148.4,62.0M142.4,49.5C141.3,48.9 137.2,46.9 135.7,45.6C134.1,44.3 133.1,42.9 133.1,41.7C133.1,40.6 135.3,39.1 135.7,38.6M148.4,46.4C149.5,46.2 153.5,45.9 154.8,44.9C156.2,43.8 156.2,40.9 156.4,40.1"/><path d="M172.1,63.8C174.0,59.3 181.7,41.0 183.1,36.9C184.6,32.8 181.3,38.9 180.9,39.3M177.2,63.8C175.8,59.1 170.1,40.5 169.1,35.7C168.0,30.9 170.5,35.1 170.8,35.0M175.8,63.8C176.9,59.4 182.0,42.3 182.6,37.9C183.1,33.4 179.7,37.1 179.2,36.9M177.0,63.8C177.7,60.8 180.5,48.6 180.9,45.8C181.3,43.0 179.8,46.7 179.6,46.9M174.9,63.8C174.3,59.0 171.3,39.3 171.3,35.3C171.3,31.3 174.4,39.2 175.1,40.0M173.6,63.8C174.5,60.8 178.7,49.3 179.0,46.3C179.3,43.2 175.9,45.7 175.3,45.6M174.4,63.8C173.7,59.2 170.9,40.9 170.5,36.3C170.1,31.8 171.6,36.3 171.9,36.3M177.6,63.8C176.5,60.6 172.4,48.9 171.3,44.8C170.1,40.6 170.8,40.0 170.7,39.0M172.3,63.8C171.2,60.7 166.4,48.1 165.7,45.2C165.0,42.3 167.6,46.0 168.0,46.2"/><path d="M201.3,63.9C201.2,59.6 200.4,42.9 200.8,37.7C201.1,32.6 202.7,32.8 203.6,32.8C204.6,32.9 206.0,32.8 206.5,38.0C207.0,43.2 206.5,59.6 206.5,63.9M201.0,50.1C200.0,49.4 196.4,47.2 195.0,45.7C193.6,44.3 192.7,42.7 192.7,41.5C192.7,40.2 194.6,38.6 195.0,38.0"/><path d="M233.4,62.8C233.3,59.3 232.4,45.6 232.8,41.3C233.2,37.1 234.7,37.3 235.6,37.3C236.6,37.4 238.0,37.3 238.4,41.6C238.9,45.8 238.4,59.3 238.4,62.8M233.1,51.5C232.1,51.4 228.6,51.9 227.2,50.7C225.8,49.5 224.9,45.9 224.9,44.4C224.9,42.9 226.8,42.1 227.2,41.6M238.4,48.7C239.4,48.4 242.9,48.0 244.0,47.3C245.2,46.5 245.2,44.9 245.4,44.4"/><path d="M265.5,64.8C265.4,60.3 264.3,43.0 264.8,37.9C265.3,32.9 267.2,34.3 268.4,34.6C269.6,34.9 271.4,34.6 272.0,39.7C272.6,44.7 272.0,60.6 272.0,64.8M265.1,51.4C263.9,50.7 259.3,48.5 257.6,47.1C255.8,45.7 254.7,44.2 254.7,43.0C254.7,41.8 257.1,40.2 257.6,39.7M272.0,48.0C273.2,47.8 277.7,47.3 279.2,46.4C280.7,45.4 280.7,43.1 281.0,42.5"/><path d="M298.9,63.8C298.8,60.1 298.0,46.1 298.4,41.6C298.7,37.2 300.2,37.1 301.1,37.1C302.0,37.1 303.4,37.1 303.9,41.6C304.3,46.0 303.9,60.1 303.9,63.8M298.6,51.9C297.7,51.8 294.2,52.2 292.9,51.0C291.6,49.7 290.7,46.1 290.7,44.5C290.7,42.9 292.5,42.0 292.9,41.6"/><path d="M17.0,95.5L20.0,76.5M12.5,73.0C12.3,71.9 10.3,67.8 11.0,66.1C11.8,64.4 15.5,62.4 17.0,62.7C18.5,62.9 18.5,67.3 20.0,67.8C21.5,68.4 24.7,65.2 25.9,66.1C27.2,67.0 27.9,71.0 27.4,73.0C26.9,75.0 24.7,77.3 23.0,78.2C21.2,79.1 18.7,79.1 17.0,78.2C15.3,77.3 13.3,73.9 12.5,73.0M17.6,86.8C16.7,86.3 13.6,83.1 12.5,83.4C11.4,83.7 11.3,87.7 11.0,88.6"/><path d="M45.7,94.6L48.9,79.0M40.7,76.2C40.4,75.3 38.2,72.0 39.0,70.5C39.9,69.1 44.1,67.5 45.7,67.7C47.4,68.0 47.4,71.5 49.1,72.0C50.8,72.4 54.4,69.8 55.8,70.5C57.2,71.3 58.0,74.5 57.4,76.2C56.9,77.8 54.4,79.7 52.4,80.4C50.5,81.1 47.7,81.1 45.7,80.4C43.8,79.7 41.5,76.9 40.7,76.2M46.4,87.5C45.5,87.0 41.9,84.4 40.7,84.7C39.5,84.9 39.3,88.2 39.0,88.9"/><path d="M80.4,97.4L83.4,79.5M76.0,76.3C75.7,75.2 73.8,71.4 74.5,69.8C75.2,68.2 78.9,66.3 80.4,66.5C81.9,66.8 81.9,70.9 83.4,71.4C84.9,72.0 88.1,69.0 89.3,69.8C90.6,70.6 91.3,74.4 90.8,76.3C90.3,78.2 88.1,80.3 86.4,81.1C84.6,82.0 82.2,82.0 80.4,81.1C78.7,80.3 76.7,77.1 76.0,76.3M81.0,89.2C80.2,88.7 77.1,85.7 76.0,86.0C74.9,86.3 74.8,90.1 74.5,90.9"/><path d="M107.9,97.4L110.4,79.2M103.3,75.8C103.0,74.7 101.0,70.9 101.8,69.2C102.5,67.5 106.4,65.6 107.9,65.9C109.4,66.2 109.4,70.3 111.0,70.9C112.5,71.4 115.8,68.4 117.1,69.2C118.3,70.0 119.1,73.9 118.6,75.8C118.1,77.8 115.8,80.0 114.0,80.8C112.2,81.7 109.7,81.7 107.9,80.8C106.1,80.0 104.1,76.7 103.3,75.8M108.5,89.1C107.6,88.6 104.4,85.5 103.3,85.8C102.2,86.1 102.0,90.0 101.8,90.8"/><path d="M139.6,98.5L143.1,79.9M134.8,76.5C134.5,75.4 132.3,71.4 133.1,69.7C133.9,68.0 138.0,66.1 139.6,66.3C141.3,66.6 141.3,70.8 142.9,71.4C144.5,72.0 148.1,68.9 149.4,69.7C150.8,70.6 151.6,74.5 151.1,76.5C150.5,78.5 148.1,80.7 146.2,81.6C144.3,82.4 141.5,82.4 139.6,81.6C137.7,80.7 135.6,77.3 134.8,76.5M140.3,90.0C139.4,89.5 136.0,86.4 134.8,86.6C133.6,86.9 133.4,90.9 133.1,91.7"/><path d="M174.9,95.2L178.4,77.6M169.5,74.4C169.2,73.3 166.8,69.5 167.7,67.9C168.6,66.3 173.1,64.4 174.9,64.7C176.7,65.0 176.7,69.0 178.6,69.5C180.4,70.1 184.3,67.1 185.8,67.9C187.3,68.7 188.3,72.5 187.6,74.4C187.0,76.2 184.3,78.4 182.2,79.2C180.1,80.0 177.1,80.0 174.9,79.2C172.8,78.4 170.4,75.2 169.5,74.4M175.7,87.2C174.6,86.7 170.8,83.7 169.5,84.0C168.2,84.3 168.0,88.0 167.7,88.8"/><path d="M202.3,94.8L203.6,78.2M197.1,75.1C196.8,74.1 194.4,70.6 195.3,69.1C196.2,67.5 200.5,65.8 202.3,66.0C204.0,66.3 204.0,70.1 205.8,70.6C207.5,71.1 211.3,68.3 212.8,69.1C214.2,69.8 215.1,73.4 214.5,75.1C214.0,76.9 211.3,78.9 209.3,79.7C207.3,80.4 204.3,80.4 202.3,79.7C200.3,78.9 197.9,75.9 197.1,75.1M203.0,87.3C202.0,86.7 198.3,84.0 197.1,84.2C195.8,84.5 195.6,88.0 195.3,88.8"/><path d="M233.8,97.0L232.5,79.6M228.7,76.4C228.4,75.4 226.2,71.7 227.0,70.1C227.9,68.5 232.1,66.7 233.8,66.9C235.5,67.2 235.5,71.2 237.2,71.7C238.9,72.2 242.6,69.3 244.0,70.1C245.4,70.9 246.3,74.6 245.7,76.4C245.1,78.3 242.6,80.4 240.6,81.2C238.6,82.0 235.8,82.0 233.8,81.2C231.8,80.4 229.6,77.2 228.7,76.4M234.5,89.1C233.5,88.6 229.9,85.7 228.7,85.9C227.5,86.2 227.3,89.9 227.0,90.7"/><path d="M267.5,95.4L266.6,79.7M262.4,76.8C262.1,75.8 259.8,72.5 260.7,71.1C261.5,69.6 265.8,68.0 267.5,68.2C269.3,68.4 269.3,72.0 271.0,72.5C272.7,73.0 276.4,70.4 277.8,71.1C279.3,71.8 280.1,75.1 279.6,76.8C279.0,78.5 276.4,80.4 274.4,81.1C272.4,81.8 269.5,81.8 267.5,81.1C265.5,80.4 263.2,77.5 262.4,76.8M268.2,88.3C267.2,87.8 263.6,85.2 262.4,85.4C261.1,85.6 261.0,89.0 260.7,89.7"/><path d="M302.2,97.3L303.8,79.7M298.1,76.5C297.9,75.5 296.1,71.7 296.7,70.1C297.4,68.5 300.8,66.7 302.2,66.9C303.5,67.2 303.5,71.2 304.9,71.7C306.2,72.3 309.2,69.3 310.3,70.1C311.4,70.9 312.1,74.7 311.7,76.5C311.2,78.4 309.2,80.5 307.6,81.3C306.0,82.1 303.7,82.1 302.2,81.3C300.6,80.5 298.8,77.3 298.1,76.5M302.7,89.3C301.9,88.8 299.1,85.8 298.1,86.1C297.1,86.4 297.0,90.1 296.7,90.9"/><path d="M2.6,108.4C3.2,107.1 5.0,100.8 6.2,100.6C7.4,100.4 8.6,107.7 9.8,107.4C11.0,107.2 12.2,99.0 13.4,98.9C14.6,98.8 15.8,107.1 17.0,106.8C18.2,106.5 19.1,96.9 20.6,96.9C22.1,96.9 24.5,106.2 25.9,106.8C27.4,107.4 28.0,100.7 29.5,100.5C31.0,100.2 34.0,104.4 34.9,105.2"/><path d="M41.1,126.3L42.8,102.2M47.8,128.0L49.5,101.5M54.6,124.7L52.9,104.2"/><path d="M70.7,127.4L72.4,102.6M77.6,129.2L79.4,100.7M84.6,125.6L82.9,104.7"/><path d="M111.4,126.6C109.9,123.8 103.9,112.2 102.2,110.1C100.4,108.0 101.3,113.3 101.1,114.0M112.4,126.6C112.4,122.8 113.3,107.7 112.5,104.0C111.8,100.3 108.5,104.4 107.7,104.5M113.7,126.6C113.0,123.8 110.7,112.8 109.6,110.0C108.6,107.1 107.5,109.7 107.1,109.6M113.1,126.6C111.6,122.7 104.8,107.2 104.1,103.2C103.3,99.3 107.8,103.0 108.5,102.9M112.0,126.6C111.3,122.2 107.7,105.3 107.8,100.1C107.9,94.9 111.7,96.2 112.5,95.4M109.6,126.6C110.8,121.8 116.1,102.3 116.7,98.0C117.4,93.6 114.2,100.0 113.7,100.4M112.0,126.6C111.3,122.5 109.3,105.8 107.9,102.2C106.5,98.7 104.2,104.7 103.5,105.2M109.9,126.6C109.0,122.9 105.6,107.9 104.0,104.2C102.5,100.6 101.2,104.6 100.7,104.6M110.8,126.6C110.7,122.6 110.2,107.2 110.1,102.5C110.0,97.8 110.4,98.9 110.4,98.1"/><path d="M138.4,125.0L139.8,102.5M144.0,126.7L145.4,100.3M149.5,123.4L148.1,105.4"/><path d="M164.3,111.6C164.7,110.1 166.1,102.3 167.1,102.1C168.0,102.0 168.9,110.7 169.9,110.6C170.8,110.5 171.7,101.5 172.7,101.4C173.6,101.3 174.5,109.7 175.5,109.9C176.4,110.2 177.1,102.7 178.3,102.7C179.4,102.7 181.3,109.9 182.5,109.9C183.6,110.0 184.1,103.4 185.3,103.1C186.5,102.8 188.8,107.4 189.5,108.2"/><path d="M196.6,108.4C197.1,107.0 198.5,100.7 199.4,100.5C200.3,100.4 201.3,107.8 202.2,107.3C203.1,106.7 204.1,97.5 205.0,97.4C205.9,97.3 206.8,106.9 207.8,106.5C208.7,106.1 209.4,94.9 210.6,94.9C211.7,94.9 213.6,105.8 214.7,106.5C215.9,107.2 216.4,99.5 217.5,99.2C218.7,98.9 221.0,103.8 221.7,104.7"/><path d="M226.1,111.1C226.5,109.6 227.8,102.0 228.7,101.9C229.6,101.7 230.5,110.3 231.4,110.1C232.3,109.9 233.1,100.8 234.0,100.7C234.9,100.5 235.8,109.4 236.7,109.4C237.6,109.4 238.2,100.6 239.3,100.6C240.4,100.6 242.2,109.1 243.3,109.4C244.4,109.7 244.9,102.7 246.0,102.4C247.1,102.1 249.3,106.8 249.9,107.6"/><path d="M271.5,126.4C272.9,122.3 278.0,105.8 279.9,101.7C281.7,97.6 282.1,101.7 282.5,101.7M269.3,126.4C270.2,122.4 274.5,107.4 274.8,102.6C275.0,97.7 271.4,98.1 270.8,97.2M271.8,126.4C271.9,123.1 272.9,110.3 272.4,106.3C271.9,102.4 269.4,103.3 268.8,102.7M274.0,126.4C272.7,123.7 266.7,113.6 266.1,110.1C265.6,106.6 269.8,106.2 270.5,105.4M271.3,126.4C270.0,123.9 264.4,114.2 263.6,111.4C262.8,108.5 265.9,109.7 266.3,109.4M271.1,126.4C271.1,123.1 270.7,110.6 270.9,106.3C271.0,102.1 271.7,101.6 271.9,100.7M269.8,126.4C270.7,123.7 274.3,112.4 275.1,110.1C275.9,107.9 274.7,112.4 274.6,112.9M269.7,126.4C269.7,122.4 269.7,107.5 269.8,102.6C269.8,97.7 269.9,98.0 269.9,97.0M272.5,126.4C273.5,123.6 276.9,112.2 278.5,109.6C280.1,107.1 281.6,110.9 282.2,111.1"/><path d="M296.1,126.8L297.6,102.6M302.1,128.4L303.6,102.2M308.1,125.1L306.6,107.7"/><path d="M7.8,144.8C10.9,144.8 23.6,142.5 26.3,144.8C29.0,147.1 26.5,156.3 24.0,158.6C21.4,160.9 13.9,160.9 11.2,158.6C8.5,156.3 8.3,147.1 7.8,144.8M17.2,144.8L20.0,131.0M12.8,132.7C13.4,132.2 14.8,129.8 16.2,129.3C17.6,128.8 20.7,129.0 21.3,130.0C21.8,131.0 20.4,134.8 19.6,135.5C18.7,136.2 16.8,134.6 16.2,134.5"/><path d="M38.8,146.2C42.1,146.2 55.4,144.0 58.2,146.2C61.0,148.5 58.4,157.5 55.7,159.7C53.1,161.9 45.2,161.9 42.4,159.7C39.5,157.5 39.4,148.5 38.8,146.2M48.7,146.2L48.9,132.8M44.1,134.5C44.7,133.9 46.2,131.6 47.6,131.1C49.1,130.7 52.3,130.8 52.9,131.8C53.5,132.8 52.0,136.4 51.2,137.2C50.3,137.9 48.2,136.3 47.6,136.2"/><path d="M68.4,144.7C71.5,144.7 84.2,142.9 86.9,144.7C89.5,146.6 87.0,153.9 84.5,155.8C82.0,157.6 74.5,157.6 71.8,155.8C69.1,153.9 69.0,146.6 68.4,144.7M77.8,144.7L75.9,133.6M73.5,135.0C74.0,134.6 75.4,132.6 76.8,132.3C78.2,131.9 81.3,132.0 81.8,132.8C82.4,133.6 81.0,136.6 80.2,137.2C79.3,137.8 77.4,136.6 76.8,136.4"/><path d="M103.3,144.0C106.0,144.0 117.1,141.8 119.4,144.0C121.8,146.2 119.6,155.0 117.4,157.3C115.2,159.5 108.6,159.5 106.2,157.3C103.9,155.0 103.8,146.2 103.3,144.0M111.5,144.0L114.2,130.8M107.7,132.4C108.2,131.9 109.4,129.6 110.6,129.1C111.8,128.7 114.5,128.8 115.0,129.8C115.5,130.8 114.3,134.4 113.6,135.1C112.8,135.8 111.1,134.2 110.6,134.1"/><path d="M134.3,145.3C137.3,145.3 149.7,143.2 152.3,145.3C155.0,147.3 152.5,155.3 150.0,157.4C147.6,159.4 140.2,159.4 137.5,157.4C134.9,155.3 134.8,147.3 134.3,145.3M143.5,145.3L144.3,133.2M139.2,134.7C139.7,134.2 141.1,132.1 142.5,131.7C143.8,131.3 146.9,131.4 147.4,132.3C147.9,133.2 146.6,136.4 145.8,137.1C144.9,137.8 143.0,136.3 142.5,136.2"/><path d="M166.9,146.1C169.6,146.1 180.9,143.7 183.2,146.1C185.6,148.6 183.4,158.3 181.2,160.7C178.9,163.2 172.2,163.2 169.8,160.7C167.5,158.3 167.4,148.6 166.9,146.1M175.2,146.1L177.1,131.5M171.3,133.3C171.8,132.7 173.1,130.2 174.3,129.7C175.6,129.2 178.3,129.3 178.8,130.4C179.3,131.5 178.0,135.5 177.3,136.3C176.5,137.0 174.8,135.3 174.3,135.2"/><path d="M196.5,145.8C199.9,145.8 213.6,144.0 216.5,145.8C219.4,147.6 216.7,154.9 214.0,156.7C211.3,158.5 203.1,158.5 200.2,156.7C197.3,154.9 197.1,147.6 196.5,145.8M206.7,145.8L206.0,134.9M202.0,136.3C202.6,135.8 204.1,133.9 205.6,133.6C207.1,133.2 210.5,133.3 211.1,134.1C211.7,134.9 210.2,137.9 209.3,138.5C208.3,139.1 206.2,137.8 205.6,137.6"/><path d="M227.6,144.3C230.3,144.3 241.6,142.5 244.0,144.3C246.4,146.2 244.2,153.5 241.9,155.3C239.7,157.2 233.0,157.2 230.6,155.3C228.2,153.5 228.1,146.2 227.6,144.3M236.0,144.3L234.6,133.3M232.1,134.7C232.6,134.2 233.8,132.3 235.1,132.0C236.3,131.6 239.1,131.7 239.6,132.5C240.1,133.3 238.8,136.3 238.1,136.9C237.3,137.5 235.6,136.2 235.1,136.1"/><path d="M262.1,145.3C264.7,145.3 275.4,142.9 277.7,145.3C279.9,147.7 277.8,157.2 275.7,159.5C273.6,161.9 267.2,161.9 265.0,159.5C262.7,157.2 262.6,147.7 262.1,145.3M270.1,145.3L272.7,131.0M266.4,132.8C266.9,132.2 268.0,129.7 269.2,129.2C270.4,128.8 273.0,128.9 273.4,130.0C273.9,131.0 272.7,134.9 272.0,135.7C271.3,136.4 269.7,134.8 269.2,134.6"/><path d="M293.4,146.6C296.4,146.6 308.4,144.1 310.9,146.6C313.5,149.0 311.1,158.7 308.7,161.2C306.3,163.6 299.2,163.6 296.6,161.2C294.1,158.7 294.0,149.0 293.4,146.6M302.3,146.6L300.8,132.0M298.2,133.8C298.7,133.2 300.1,130.6 301.4,130.1C302.7,129.7 305.6,129.8 306.2,130.9C306.7,132.0 305.4,135.9 304.6,136.7C303.8,137.5 301.9,135.8 301.4,135.6"/><path d="M0.2,192.4C0.7,189.9 1.5,182.2 3.4,177.0C5.3,171.9 8.2,163.2 11.4,161.5C14.6,159.7 21.0,163.6 22.6,166.7C24.2,169.9 23.2,176.7 21.0,180.4C18.9,184.2 12.7,187.9 9.8,189.0C6.9,190.1 4.4,187.6 3.4,187.3M1.8,189.0L17.8,170.2"/><path d="M35.4,188.6C35.9,186.4 36.7,180.1 38.5,175.7C40.3,171.3 43.1,163.7 46.1,162.2C49.2,160.8 55.3,164.4 56.9,167.1C58.4,169.8 57.4,175.5 55.3,178.6C53.3,181.7 47.4,184.8 44.6,185.7C41.8,186.7 39.5,184.5 38.5,184.3M36.9,185.7L52.3,170.0"/><path d="M65.3,189.6C65.9,187.3 66.8,180.1 68.9,175.6C71.0,171.1 74.3,164.1 77.9,162.6C81.5,161.0 88.7,163.6 90.5,166.3C92.3,169.0 91.1,175.4 88.7,178.7C86.3,182.1 79.4,185.5 76.1,186.5C72.8,187.5 70.1,185.2 68.9,184.9M67.1,186.5L85.1,169.4"/><path d="M100.2,189.3C100.7,186.8 101.4,178.9 103.1,174.3C104.8,169.8 107.4,163.9 110.3,162.2C113.1,160.5 118.8,161.8 120.3,164.4C121.7,166.9 120.7,174.1 118.8,177.7C116.9,181.3 111.4,184.9 108.8,186.0C106.2,187.1 104.1,184.6 103.1,184.3M101.7,186.0L116.0,167.7"/><path d="M130.0,185.6C130.5,183.5 131.2,177.4 132.9,173.4C134.5,169.3 137.2,162.4 140.0,161.0C142.9,159.6 148.7,162.7 150.1,165.2C151.5,167.7 150.6,173.1 148.7,176.1C146.7,179.0 141.2,181.9 138.6,182.9C136.0,183.8 133.8,181.7 132.9,181.5M131.4,182.9L145.8,167.9"/><path d="M163.9,190.1C164.5,187.8 165.3,181.0 167.3,176.3C169.3,171.5 172.4,163.3 175.7,161.8C179.1,160.2 185.9,164.1 187.6,167.0C189.3,170.0 188.1,176.0 185.9,179.3C183.6,182.7 177.1,186.0 174.0,187.0C170.9,188.0 168.4,185.7 167.3,185.5M165.6,187.0L182.5,170.1"/><path d="M189.4,193.1C190.0,190.4 190.9,182.1 193.1,176.9C195.2,171.7 198.5,163.9 202.2,162.1C205.8,160.3 213.1,163.0 214.9,166.1C216.7,169.2 215.5,176.6 213.1,180.5C210.7,184.4 203.7,188.3 200.3,189.5C197.0,190.7 194.3,188.0 193.1,187.7M191.2,189.5L209.5,169.7"/><path d="M224.6,191.7C225.1,188.9 225.8,180.1 227.6,175.3C229.4,170.6 232.3,165.2 235.3,163.4C238.4,161.5 244.6,161.8 246.1,164.4C247.6,167.1 246.6,175.0 244.6,179.0C242.5,182.9 236.6,186.8 233.8,188.0C231.0,189.2 228.7,186.5 227.6,186.2M226.1,188.0L241.5,168.1"/><path d="M260.0,190.7C260.5,188.3 261.3,180.9 263.3,176.5C265.3,172.2 268.3,166.1 271.7,164.5C275.0,162.9 281.7,164.6 283.4,167.1C285.1,169.6 283.9,176.3 281.7,179.7C279.5,183.1 273.1,186.5 270.0,187.6C266.9,188.6 264.4,186.3 263.3,186.0M261.6,187.6L278.4,170.3"/><path d="M291.1,188.8C291.6,186.4 292.2,179.1 293.8,174.0C295.4,169.0 297.8,160.1 300.5,158.5C303.2,156.8 308.5,161.0 309.8,164.1C311.2,167.3 310.3,173.7 308.5,177.3C306.7,180.9 301.6,184.5 299.1,185.6C296.7,186.6 294.7,184.2 293.8,183.9M292.5,185.6L305.8,167.4"/><path d="M15.5,221.8C15.4,219.7 14.9,212.6 14.9,209.1C14.9,205.6 15.4,202.1 15.5,200.7M2.4,209.1C3.5,207.7 7.1,202.1 9.3,200.5C11.5,198.8 13.4,199.0 15.5,199.2C17.6,199.5 19.6,200.7 21.8,202.1C24.0,203.5 27.5,206.8 28.7,207.7M7.7,207.7C9.0,206.3 12.7,199.2 15.5,199.2C18.4,199.3 23.4,206.6 24.9,208.0"/><path d="M49.5,222.6C49.4,220.3 48.8,212.6 48.8,208.7C48.8,204.8 49.4,200.9 49.5,199.4M36.1,208.7C37.2,207.6 40.8,203.7 43.1,201.9C45.3,200.0 47.3,198.0 49.5,197.8C51.6,197.7 53.6,199.4 55.9,200.9C58.1,202.5 61.7,206.1 62.9,207.1M41.5,207.1C42.8,205.6 46.5,197.2 49.5,197.8C52.4,198.5 57.4,208.8 59.0,210.9"/><path d="M77.0,223.3C76.9,221.1 76.4,213.8 76.4,210.1C76.4,206.4 76.9,202.8 77.0,201.3M62.9,210.1C64.2,208.9 68.0,204.4 70.3,202.6C72.7,200.9 74.8,199.8 77.0,199.9C79.3,199.9 81.4,201.3 83.8,202.8C86.1,204.2 89.9,207.7 91.2,208.6M68.6,208.6C70.0,207.2 74.0,199.5 77.0,199.9C80.1,200.2 85.4,208.9 87.1,210.7"/><path d="M112.5,222.1C112.4,219.9 111.9,212.5 111.9,208.8C111.9,205.1 112.4,201.4 112.5,199.9M100.1,208.8C101.2,207.4 104.5,202.0 106.6,200.3C108.6,198.6 110.5,198.2 112.5,198.4C114.4,198.6 116.3,199.9 118.4,201.4C120.4,202.8 123.8,206.3 124.8,207.3M105.1,207.3C106.3,205.8 109.8,198.1 112.5,198.4C115.2,198.8 119.8,207.6 121.3,209.4"/><path d="M141.5,223.4C141.4,221.2 140.8,214.0 140.8,210.4C140.8,206.8 141.4,203.2 141.5,201.8M127.3,210.4C128.5,209.3 132.4,205.4 134.7,203.7C137.1,202.0 139.2,200.4 141.5,200.4C143.8,200.3 145.9,201.8 148.3,203.2C150.6,204.7 154.5,208.0 155.7,209.0M133.0,209.0C134.5,207.6 138.4,199.8 141.5,200.4C144.6,200.9 150.0,210.2 151.7,212.2"/><path d="M173.4,220.5C173.4,218.4 172.9,211.5 172.9,208.1C172.9,204.6 173.4,201.2 173.4,199.8M162.6,208.1C163.5,206.8 166.5,202.0 168.3,200.4C170.1,198.7 171.7,198.3 173.4,198.4C175.2,198.6 176.8,199.8 178.6,201.2C180.4,202.6 183.4,205.8 184.3,206.7M167.0,206.7C168.1,205.3 171.1,198.5 173.4,198.4C175.8,198.4 179.9,205.0 181.2,206.3"/><path d="M204.1,221.6C204.0,219.5 203.4,212.6 203.4,209.1C203.4,205.7 204.0,202.2 204.1,200.8M190.9,209.1C192.0,207.8 195.6,202.7 197.8,201.0C200.0,199.4 202.0,199.2 204.1,199.4C206.2,199.6 208.2,200.8 210.4,202.2C212.6,203.6 216.1,206.8 217.3,207.7M196.2,207.7C197.5,206.4 201.2,199.1 204.1,199.4C207.0,199.8 211.9,208.0 213.5,209.7"/><path d="M236.7,222.2C236.6,219.8 236.1,211.9 236.1,207.9C236.1,204.0 236.6,200.1 236.7,198.5M224.2,207.9C225.3,206.6 228.7,201.6 230.7,199.7C232.8,197.9 234.7,196.8 236.7,196.9C238.6,197.0 240.5,198.5 242.6,200.1C244.6,201.6 248.0,205.3 249.1,206.4M229.3,206.4C230.5,204.8 233.9,196.3 236.7,196.9C239.4,197.4 244.1,207.5 245.5,209.7"/><path d="M272.3,221.6C272.2,219.5 271.7,212.5 271.7,208.9C271.7,205.4 272.2,201.9 272.3,200.5M261.2,208.9C262.2,207.7 265.2,203.3 267.0,201.7C268.9,200.1 270.5,199.0 272.3,199.1C274.0,199.1 275.7,200.5 277.5,201.9C279.4,203.3 282.3,206.6 283.3,207.5M265.7,207.5C266.8,206.1 269.9,199.1 272.3,199.1C274.7,199.1 278.8,206.2 280.1,207.6"/><path d="M304.1,221.2C304.0,219.0 303.5,211.6 303.5,207.9C303.5,204.3 304.0,200.6 304.1,199.1M291.4,207.9C292.5,206.6 295.9,201.5 298.0,199.8C300.1,198.1 302.1,197.5 304.1,197.6C306.1,197.8 308.0,199.1 310.1,200.6C312.2,202.1 315.6,205.5 316.7,206.5M296.5,206.5C297.8,205.0 301.3,197.0 304.1,197.6C306.8,198.3 311.6,208.1 313.1,210.3"/><path d="M14.0,256.6L14.6,243.8M21.0,256.6L19.8,243.8M14.6,243.8C13.2,243.4 8.0,243.4 6.4,241.8C4.9,240.2 4.4,236.5 5.3,234.1C6.1,231.6 9.1,228.3 11.7,227.0C14.2,225.7 17.5,225.4 20.4,226.3C23.3,227.3 27.7,229.8 29.1,232.5C30.4,235.1 30.1,240.3 28.5,242.1C27.0,244.0 21.2,243.5 19.8,243.8"/><path d="M46.5,251.0L47.1,239.8M53.6,251.0L52.5,239.8M47.1,239.8C45.8,239.3 40.4,238.0 38.9,236.6C37.3,235.2 36.8,233.3 37.7,231.5C38.6,229.6 41.6,226.4 44.2,225.3C46.7,224.2 50.1,224.0 53.0,224.8C56.0,225.5 60.5,227.8 61.9,230.1C63.3,232.3 62.9,236.8 61.3,238.4C59.7,240.1 53.9,239.6 52.5,239.8"/><path d="M76.9,253.8L77.5,241.1M84.5,253.8L83.2,241.1M77.5,241.1C76.0,241.1 70.3,242.5 68.6,240.9C66.9,239.4 66.4,234.3 67.4,231.6C68.3,228.9 71.6,225.9 74.3,224.7C77.1,223.4 80.7,223.1 83.9,224.0C87.0,224.9 91.9,227.5 93.4,230.1C94.8,232.6 94.4,237.7 92.7,239.5C91.0,241.4 84.8,240.9 83.2,241.1"/><path d="M109.2,251.6L109.7,240.0M115.5,251.6L114.4,240.0M109.7,240.0C108.5,239.6 103.7,239.1 102.3,237.6C100.9,236.1 100.5,233.4 101.3,231.3C102.1,229.1 104.8,226.0 107.1,224.9C109.4,223.7 112.3,223.5 115.0,224.3C117.6,225.1 121.6,227.4 122.8,229.8C124.1,232.2 123.7,236.8 122.3,238.5C120.9,240.2 115.7,239.7 114.4,240.0"/><path d="M137.7,254.1L138.4,240.7M145.7,254.1L144.4,240.7M138.4,240.7C136.8,240.3 130.8,239.9 129.0,238.2C127.2,236.5 126.6,233.1 127.6,230.6C128.7,228.1 132.1,224.5 135.0,223.2C137.9,221.8 141.7,221.6 145.1,222.5C148.4,223.5 153.6,226.2 155.1,228.9C156.7,231.7 156.2,237.0 154.5,239.0C152.7,241.0 146.1,240.4 144.4,240.7"/><path d="M168.4,254.9L169.1,242.7M176.5,254.9L175.1,242.7M169.1,242.7C167.6,242.5 161.5,243.0 159.7,241.5C157.9,240.0 157.4,236.0 158.4,233.6C159.4,231.1 162.9,228.1 165.8,226.8C168.7,225.6 172.5,225.4 175.8,226.2C179.2,227.1 184.3,229.5 185.9,232.0C187.4,234.5 187.0,239.4 185.2,241.2C183.4,243.0 176.8,242.4 175.1,242.7"/><path d="M205.0,256.5L205.8,242.1M213.6,256.5L212.2,242.1M205.8,242.1C204.1,242.1 197.7,243.9 195.8,242.1C193.9,240.3 193.3,234.4 194.4,231.3C195.4,228.2 199.1,224.9 202.2,223.4C205.3,222.0 209.3,221.7 212.9,222.7C216.5,223.7 221.9,226.6 223.6,229.5C225.3,232.5 224.8,238.2 222.9,240.3C221.0,242.4 214.0,241.8 212.2,242.1"/><path d="M234.4,255.6L235.0,243.6M241.3,255.6L240.2,243.6M235.0,243.6C233.6,243.7 228.4,245.5 226.9,244.0C225.4,242.5 224.9,237.2 225.8,234.6C226.6,231.9 229.6,229.2 232.1,228.0C234.6,226.8 237.9,226.5 240.7,227.4C243.6,228.2 248.0,230.6 249.4,233.1C250.7,235.5 250.4,240.3 248.8,242.1C247.3,243.8 241.6,243.3 240.2,243.6"/><path d="M267.7,251.9C267.7,248.1 267.3,232.4 267.4,229.2C267.4,226.1 268.0,232.3 268.1,232.9M269.8,251.9C269.9,249.1 270.8,237.1 270.2,234.7C269.7,232.4 267.2,237.3 266.6,237.9M266.8,251.9C268.5,247.9 275.2,231.9 277.0,227.9C278.7,224.0 277.1,228.4 277.1,228.5M270.3,251.9C270.4,249.3 270.1,239.8 270.8,236.3C271.4,232.8 273.6,231.9 274.2,231.0M267.1,251.9C267.6,249.0 270.6,236.6 270.4,234.1C270.1,231.6 266.4,236.5 265.6,237.0M270.2,251.9C271.4,247.5 276.8,229.4 277.3,225.6C277.8,221.7 274.0,228.0 273.3,228.5M267.9,251.9C268.6,247.9 271.1,231.5 272.4,227.5C273.6,223.5 274.9,227.7 275.4,227.8M268.5,251.9C269.6,248.2 272.8,232.7 274.7,229.3C276.6,225.9 279.1,231.1 280.0,231.4M270.7,251.9C270.5,248.5 269.2,233.7 269.3,231.1C269.5,228.4 271.3,235.3 271.7,236.1"/><path d="M299.6,257.7L300.2,243.7M306.8,257.7L305.6,243.7M300.2,243.7C298.8,243.7 293.4,245.4 291.8,243.7C290.2,242.0 289.7,236.3 290.6,233.3C291.5,230.3 294.6,227.0 297.2,225.6C299.8,224.2 303.2,223.9 306.2,224.9C309.2,225.9 313.8,228.7 315.2,231.5C316.6,234.4 316.2,240.0 314.6,242.0C313.0,244.0 307.1,243.4 305.6,243.7"/></g></svg><div class="t" style="left:515.0px;top:817.0px;width:355px;text-align:center;font-size:8.3px;line-height:10px;color:#222;transform:scaleX(0.97);transform-origin:50% 0">image categories (per row): [&#x27;bush&#x27;, &#x27;cactus&#x27;, &#x27;flower&#x27;, &#x27;grass&#x27;, &#x27;house plant&#x27;, &#x27;leaf&#x27;, &#x27;palm tree&#x27;, &#x27;tree&#x27;]</div>
<div style="position:absolute;left:980px;top:692px;width:548px;height:530px;box-sizing:border-box;border:2px solid #e7e8f0;border-radius:10px;background:#fefefe"></div>
<div class="t" style="left:1004.0px;top:733.9px;font-size:26px;line-height:26px;color:#5a6480;transform:scaleX(1.0351);">Heatmap: Avg Pixel Values per ...</div>
<div style="position:absolute;left:1012.3px;top:843.1px;width:105.5px;height:105.5px;background:radial-gradient(2.6% 12% at 0% 38%, #fde725 0%, #bddf26 35%, rgba(189,223,38,0) 100%),radial-gradient(2.6% 12% at 100% 38%, #fde725 0%, #bddf26 35%, rgba(189,223,38,0) 100%),radial-gradient(50% 8% at 50% 0%, #22a884 0%, rgba(34,168,132,0) 100%),radial-gradient(40% 34% at 50% 47%, #414487 0%, rgba(65,68,135,0.7) 50%, rgba(65,68,135,0) 100%),radial-gradient(18% 18% at 0% 0%, #46337f 0%, rgba(70,51,127,0) 100%),radial-gradient(18% 18% at 100% 0%, #46337f 0%, rgba(70,51,127,0) 100%),linear-gradient(180deg, #2a788e 0%, #2a788e 15%, #31688e 35%, #3b528b 55%, #46337f 78%, #440154 100%);"></div>
<div class="t" style="left:992.3px;top:826.1px;width:145.5px;text-align:center;font-size:12.5px;line-height:14px;color:#262626;transform:scaleX(0.95);transform-origin:50% 0">bush [0]</div>
<div style="position:absolute;left:1138.5px;top:843.1px;width:105.5px;height:105.5px;background:radial-gradient(2.6% 12% at 0% 40%, #fde725 0%, #bddf26 35%, rgba(189,223,38,0) 100%),linear-gradient(180deg, rgba(68,1,84,0) 60%, rgba(68,1,84,0.5) 100%),linear-gradient(90deg, #2c718e 0%, #31688e 30%, #3b528b 60%, #46327e 85%, #450f5f 100%);"></div>
<div class="t" style="left:1118.5px;top:826.1px;width:145.5px;text-align:center;font-size:12.5px;line-height:14px;color:#262626;transform:scaleX(0.95);transform-origin:50% 0">cactus [1]</div>
<div style="position:absolute;left:1264.7px;top:843.1px;width:105.5px;height:105.5px;background:radial-gradient(2.6% 12% at 0% 30%, #fde725 0%, #bddf26 35%, rgba(189,223,38,0) 100%),radial-gradient(30% 35% at 28% 40%, #28ae80 0%, #21918c 40%, rgba(33,145,140,0) 100%),radial-gradient(14% 30% at 32% 80%, #2a788e 0%, rgba(42,120,142,0) 100%),linear-gradient(90deg, #2c718e 0%, #31688e 30%, #3e4a89 60%, #46307e 80%, #440154 100%);"></div>
<div class="t" style="left:1244.7px;top:826.1px;width:145.5px;text-align:center;font-size:12.5px;line-height:14px;color:#262626;transform:scaleX(0.95);transform-origin:50% 0">flower [2]</div>
<div style="position:absolute;left:1390.9px;top:843.1px;width:105.5px;height:105.5px;background:radial-gradient(2.6% 12% at 0% 15%, #fde725 0%, #bddf26 35%, rgba(189,223,38,0) 100%),linear-gradient(180deg, #3e4a89 0%, #7ad151 4%, #bddf26 9%, #addc30 15%, #5ec962 20%, #22a884 27%, #21918c 34%, #2a788e 42%, #31688e 52%, #3b528b 64%, #46327e 80%, #440154 100%);"></div>
<div class="t" style="left:1370.9px;top:826.1px;width:145.5px;text-align:center;font-size:12.5px;line-height:14px;color:#262626;transform:scaleX(0.95);transform-origin:50% 0">grass [3]</div>
<div style="position:absolute;left:1012.3px;top:974.1px;width:105.5px;height:105.5px;background:radial-gradient(16% 4% at 28% 100%, #fde725 0%, rgba(253,231,37,0) 100%),radial-gradient(10% 10% at 28% 78%, #433e85 0%, rgba(67,62,133,0) 100%),radial-gradient(26% 36% at 26% 30%, #bddf26 0%, #7ad151 25%, #22a884 55%, rgba(34,168,132,0) 100%),radial-gradient(18% 30% at 25% 60%, #21918c 0%, rgba(33,145,140,0) 100%),linear-gradient(90deg, #2a788e 0%, #2c718e 25%, #3b528b 50%, #472a7a 75%, #440154 100%);"></div>
<div class="t" style="left:992.3px;top:957.1px;width:145.5px;text-align:center;font-size:12.5px;line-height:14px;color:#262626;transform:scaleX(0.95);transform-origin:50% 0">house plant [4]</div>
<div style="position:absolute;left:1138.5px;top:974.1px;width:105.5px;height:105.5px;background:radial-gradient(2.6% 12% at 0% 45%, #fde725 0%, #bddf26 35%, rgba(189,223,38,0) 100%),linear-gradient(135deg, #33638d 0%, #2c718e 25%, #355f8d 50%, #433e85 75%, #440154 100%);"></div>
<div class="t" style="left:1118.5px;top:957.1px;width:145.5px;text-align:center;font-size:12.5px;line-height:14px;color:#262626;transform:scaleX(0.95);transform-origin:50% 0">leaf [5]</div>
<div style="position:absolute;left:1264.7px;top:974.1px;width:105.5px;height:105.5px;background:radial-gradient(30% 28% at 46% 27%, #fde725 0%, #bddf26 18%, #5ec962 45%, rgba(94,201,98,0) 100%),radial-gradient(55% 50% at 46% 30%, #22a884 0%, #21918c 45%, rgba(33,145,140,0) 100%),radial-gradient(28% 42% at 0% 100%, #440154 0%, rgba(68,1,84,0) 100%),radial-gradient(28% 42% at 100% 100%, #440154 0%, rgba(68,1,84,0) 100%),radial-gradient(18% 18% at 100% 0%, #46327e 0%, rgba(70,50,126,0) 100%),radial-gradient(14% 14% at 0% 0%, #39568c 0%, rgba(57,86,140,0) 100%),linear-gradient(180deg, #2c718e 0%, #2a788e 30%, #31688e 60%, #3b528b 100%);"></div>
<div class="t" style="left:1244.7px;top:957.1px;width:145.5px;text-align:center;font-size:12.5px;line-height:14px;color:#262626;transform:scaleX(0.95);transform-origin:50% 0">palm tree [6]</div>
<div style="position:absolute;left:1390.9px;top:974.1px;width:105.5px;height:105.5px;background:radial-gradient(2.6% 12% at 0% 30%, #fde725 0%, #bddf26 35%, rgba(189,223,38,0) 100%),radial-gradient(25% 6% at 50% 0%, #22a884 0%, rgba(34,168,132,0) 100%),radial-gradient(30% 17% at 50% 30%, #433e85 0%, rgba(62,74,137,0.6) 50%, rgba(62,74,137,0) 100%),radial-gradient(26% 38% at 0% 88%, #440154 0%, rgba(68,1,84,0) 100%),radial-gradient(26% 38% at 100% 88%, #440154 0%, rgba(68,1,84,0) 100%),radial-gradient(14% 30% at 100% 25%, #46327e 0%, rgba(70,50,126,0) 100%),radial-gradient(14% 14% at 0% 0%, #46327e 0%, rgba(70,50,126,0) 100%),linear-gradient(180deg, #2c718e 0%, #2a788e 35%, #31688e 65%, #3b528b 100%);"></div>
<div class="t" style="left:1370.9px;top:957.1px;width:145.5px;text-align:center;font-size:12.5px;line-height:14px;color:#262626;transform:scaleX(0.95);transform-origin:50% 0">tree [7]</div>
<div style="position:absolute;left:1548px;top:692px;width:548px;height:530px;box-sizing:border-box;border:2px solid #e7e8f0;border-radius:10px;background:#fefefe"></div>
<div class="t" style="left:1572.0px;top:733.9px;font-size:26px;line-height:26px;color:#5a6480;transform:scaleX(1.0351);">Heatmap: Avg Pixel Values per ...</div>
<div style="position:absolute;left:1580.3px;top:843.1px;width:105.5px;height:105.5px;background:radial-gradient(2.6% 12% at 0% 38%, #fde725 0%, #bddf26 35%, rgba(189,223,38,0) 100%),radial-gradient(2.6% 12% at 100% 38%, #fde725 0%, #bddf26 35%, rgba(189,223,38,0) 100%),radial-gradient(45% 9% at 50% 0%, #44bf70 0%, rgba(68,191,112,0) 100%),radial-gradient(40% 34% at 50% 47%, #3b528b 0%, rgba(59,82,139,0.7) 50%, rgba(59,82,139,0) 100%),radial-gradient(18% 18% at 0% 0%, #46337f 0%, rgba(70,51,127,0) 100%),radial-gradient(18% 18% at 100% 0%, #46337f 0%, rgba(70,51,127,0) 100%),linear-gradient(180deg, #21918c 0%, #2a788e 18%, #31688e 38%, #3b528b 58%, #46337f 80%, #440154 100%);"></div>
<div class="t" style="left:1560.3px;top:826.1px;width:145.5px;text-align:center;font-size:12.5px;line-height:14px;color:#262626;transform:scaleX(0.95);transform-origin:50% 0">bush [0]</div>
<div style="position:absolute;left:1706.5px;top:843.1px;width:105.5px;height:105.5px;background:radial-gradient(2.6% 12% at 0% 40%, #fde725 0%, #bddf26 35%, rgba(189,223,38,0) 100%),radial-gradient(2.6% 12% at 100% 40%, #fde725 0%, #bddf26 35%, rgba(189,223,38,0) 100%),radial-gradient(45% 60% at 50% 42%, #21918c 0%, rgba(42,120,142,0.8) 50%, rgba(42,120,142,0) 100%),radial-gradient(18% 18% at 0% 0%, #46337f 0%, rgba(70,51,127,0) 100%),radial-gradient(18% 18% at 100% 0%, #46337f 0%, rgba(70,51,127,0) 100%),linear-gradient(180deg, #33638d 0%, #355f8d 50%, #3e4a89 80%, #46327e 100%);"></div>
<div class="t" style="left:1686.5px;top:826.1px;width:145.5px;text-align:center;font-size:12.5px;line-height:14px;color:#262626;transform:scaleX(0.95);transform-origin:50% 0">cactus [1]</div>
<div style="position:absolute;left:1832.7px;top:843.1px;width:105.5px;height:105.5px;background:radial-gradient(2.6% 12% at 0% 30%, #fde725 0%, #bddf26 35%, rgba(189,223,38,0) 100%),radial-gradient(2.6% 12% at 100% 30%, #fde725 0%, #bddf26 35%, rgba(189,223,38,0) 100%),radial-gradient(40% 46% at 52% 40%, #addc30 0%, #7ad151 25%, #22a884 55%, rgba(34,168,132,0) 100%),radial-gradient(22% 35% at 0% 100%, #440154 0%, rgba(68,1,84,0) 100%),radial-gradient(22% 35% at 100% 100%, #440154 0%, rgba(68,1,84,0) 100%),radial-gradient(16% 16% at 0% 0%, #46337f 0%, rgba(70,51,127,0) 100%),radial-gradient(16% 16% at 100% 0%, #46337f 0%, rgba(70,51,127,0) 100%),linear-gradient(180deg, #2a788e 0%, #2c718e 50%, #3b528b 85%, #414487 100%);"></div>
<div class="t" style="left:1812.7px;top:826.1px;width:145.5px;text-align:center;font-size:12.5px;line-height:14px;color:#262626;transform:scaleX(0.95);transform-origin:50% 0">flower [2]</div>
<div style="position:absolute;left:1958.9px;top:843.1px;width:105.5px;height:105.5px;background:radial-gradient(2.6% 12% at 0% 15%, #fde725 0%, #bddf26 35%, rgba(189,223,38,0) 100%),linear-gradient(180deg, #3e4a89 0%, #7ad151 4%, #bddf26 9%, #addc30 15%, #5ec962 20%, #22a884 27%, #21918c 34%, #2a788e 42%, #31688e 52%, #3b528b 64%, #46327e 80%, #440154 100%);"></div>
<div class="t" style="left:1938.9px;top:826.1px;width:145.5px;text-align:center;font-size:12.5px;line-height:14px;color:#262626;transform:scaleX(0.95);transform-origin:50% 0">grass [3]</div>
<div style="position:absolute;left:1580.3px;top:974.1px;width:105.5px;height:105.5px;background:radial-gradient(40% 3% at 50% 100%, #fde725 0%, rgba(253,231,37,0) 100%),radial-gradient(14% 12% at 27% 85%, #46307e 0%, rgba(70,48,126,0) 100%),radial-gradient(14% 12% at 73% 85%, #46307e 0%, rgba(70,48,126,0) 100%),radial-gradient(10% 18% at 0% 45%, #440154 0%, rgba(68,1,84,0) 100%),radial-gradient(10% 18% at 100% 45%, #440154 0%, rgba(68,1,84,0) 100%),radial-gradient(15% 15% at 0% 0%, #46337f 0%, rgba(70,51,127,0) 100%),radial-gradient(15% 15% at 100% 0%, #46337f 0%, rgba(70,51,127,0) 100%),radial-gradient(35% 30% at 50% 32%, #addc30 0%, #5ec962 35%, #21918c 70%, rgba(33,145,140,0) 100%),linear-gradient(180deg, #2a788e 0%, #21918c 35%, #2a788e 65%, #31688e 100%);"></div>
<div class="t" style="left:1560.3px;top:957.1px;width:145.5px;text-align:center;font-size:12.5px;line-height:14px;color:#262626;transform:scaleX(0.95);transform-origin:50% 0">house plant [4]</div>
<div style="position:absolute;left:1706.5px;top:974.1px;width:105.5px;height:105.5px;background:radial-gradient(2.6% 12% at 0% 48%, #fde725 0%, #bddf26 35%, rgba(189,223,38,0) 100%),radial-gradient(2.6% 12% at 100% 48%, #fde725 0%, #bddf26 35%, rgba(189,223,38,0) 100%),radial-gradient(40% 24% at 55% 100%, #440154 0%, rgba(68,1,84,0) 100%),linear-gradient(180deg, #2c718e 0%, #2f6b8e 40%, #39568c 70%, #433e85 100%);"></div>
<div class="t" style="left:1686.5px;top:957.1px;width:145.5px;text-align:center;font-size:12.5px;line-height:14px;color:#262626;transform:scaleX(0.95);transform-origin:50% 0">leaf [5]</div>
<div style="position:absolute;left:1832.7px;top:974.1px;width:105.5px;height:105.5px;background:radial-gradient(30% 28% at 46% 27%, #fde725 0%, #bddf26 18%, #5ec962 45%, rgba(94,201,98,0) 100%),radial-gradient(55% 50% at 46% 30%, #22a884 0%, #21918c 45%, rgba(33,145,140,0) 100%),radial-gradient(28% 42% at 0% 100%, #440154 0%, rgba(68,1,84,0) 100%),radial-gradient(28% 42% at 100% 100%, #440154 0%, rgba(68,1,84,0) 100%),radial-gradient(18% 18% at 100% 0%, #46327e 0%, rgba(70,50,126,0) 100%),radial-gradient(14% 14% at 0% 0%, #39568c 0%, rgba(57,86,140,0) 100%),linear-gradient(180deg, #2a788e 0%, #21918c 30%, #2a788e 60%, #33638d 100%);"></div>
<div class="t" style="left:1812.7px;top:957.1px;width:145.5px;text-align:center;font-size:12.5px;line-height:14px;color:#262626;transform:scaleX(0.95);transform-origin:50% 0">palm tree [6]</div>
<div style="position:absolute;left:1958.9px;top:974.1px;width:105.5px;height:105.5px;background:radial-gradient(2.6% 12% at 0% 30%, #fde725 0%, #bddf26 35%, rgba(189,223,38,0) 100%),radial-gradient(2.6% 12% at 100% 28%, #fde725 0%, #bddf26 35%, rgba(189,223,38,0) 100%),radial-gradient(25% 6% at 50% 0%, #fde725 0%, rgba(34,168,132,0) 100%),radial-gradient(30% 17% at 50% 30%, #433e85 0%, rgba(62,74,137,0.6) 50%, rgba(62,74,137,0) 100%),radial-gradient(26% 38% at 0% 88%, #440154 0%, rgba(68,1,84,0) 100%),radial-gradient(26% 38% at 100% 88%, #440154 0%, rgba(68,1,84,0) 100%),radial-gradient(14% 30% at 100% 25%, #46327e 0%, rgba(70,50,126,0) 100%),radial-gradient(14% 14% at 0% 0%, #46327e 0%, rgba(70,50,126,0) 100%),linear-gradient(180deg, #2a788e 0%, #2c718e 35%, #31688e 65%, #39568c 100%);"></div>
<div class="t" style="left:1938.9px;top:957.1px;width:145.5px;text-align:center;font-size:12.5px;line-height:14px;color:#262626;transform:scaleX(0.95);transform-origin:50% 0">tree [7]</div>
<div style="position:absolute;left:2116px;top:692px;width:548px;height:530px;box-sizing:border-box;border:2px solid #e7e8f0;border-radius:10px;background:#fefefe"></div>
<div class="t" style="left:2140.0px;top:733.9px;font-size:26px;line-height:26px;color:#5a6480;transform:scaleX(1.0351);">Heatmap: Avg Pixel Values per ...</div>
<div style="position:absolute;left:2148.3px;top:843.1px;width:105.5px;height:105.5px;background:radial-gradient(2.6% 12% at 0% 38%, #fde725 0%, #bddf26 35%, rgba(189,223,38,0) 100%),radial-gradient(2.6% 12% at 100% 38%, #fde725 0%, #bddf26 35%, rgba(189,223,38,0) 100%),radial-gradient(50% 8% at 50% 0%, #21918c 0%, rgba(33,145,140,0) 100%),radial-gradient(40% 34% at 50% 47%, #46327e 0%, rgba(70,50,126,0.7) 50%, rgba(70,50,126,0) 100%),linear-gradient(180deg, #2c718e 0%, #33638d 20%, #3e4a89 45%, #472d7b 70%, #440154 100%);"></div>
<div class="t" style="left:2128.3px;top:826.1px;width:145.5px;text-align:center;font-size:12.5px;line-height:14px;color:#262626;transform:scaleX(0.95);transform-origin:50% 0">bush [0]</div>
<div style="position:absolute;left:2274.5px;top:843.1px;width:105.5px;height:105.5px;background:radial-gradient(2.6% 12% at 0% 38%, #fde725 0%, #bddf26 35%, rgba(189,223,38,0) 100%),linear-gradient(90deg, #33638d 0%, #39568c 35%, #443a83 65%, #440154 100%);"></div>
<div class="t" style="left:2254.5px;top:826.1px;width:145.5px;text-align:center;font-size:12.5px;line-height:14px;color:#262626;transform:scaleX(0.95);transform-origin:50% 0">cactus [1]</div>
<div style="position:absolute;left:2400.7px;top:843.1px;width:105.5px;height:105.5px;background:radial-gradient(2.6% 12% at 0% 30%, #fde725 0%, #bddf26 35%, rgba(189,223,38,0) 100%),radial-gradient(35% 40% at 30% 35%, #22a884 0%, #2a788e 40%, rgba(42,120,142,0) 100%),linear-gradient(90deg, #31688e 0%, #355f8d 35%, #433e85 65%, #440154 100%);"></div>
<div class="t" style="left:2380.7px;top:826.1px;width:145.5px;text-align:center;font-size:12.5px;line-height:14px;color:#262626;transform:scaleX(0.95);transform-origin:50% 0">flower [2]</div>
<div style="position:absolute;left:2526.9px;top:843.1px;width:105.5px;height:105.5px;background:radial-gradient(2.6% 12% at 0% 15%, #fde725 0%, #bddf26 35%, rgba(189,223,38,0) 100%),linear-gradient(180deg, #3e4a89 0%, #44bf70 5%, #7ad151 11%, #22a884 18%, #2a788e 30%, #355f8d 45%, #414487 65%, #472777 85%, #440154 100%);"></div>
<div class="t" style="left:2506.9px;top:826.1px;width:145.5px;text-align:center;font-size:12.5px;line-height:14px;color:#262626;transform:scaleX(0.95);transform-origin:50% 0">grass [3]</div>
<div style="position:absolute;left:2148.3px;top:974.1px;width:105.5px;height:105.5px;background:radial-gradient(16% 4% at 28% 100%, #5ec962 0%, rgba(94,201,98,0) 100%),radial-gradient(24% 36% at 27% 30%, #7ad151 0%, #22a884 35%, #2a788e 65%, rgba(42,120,142,0) 100%),radial-gradient(14% 25% at 25% 62%, #2a788e 0%, rgba(42,120,142,0) 100%),linear-gradient(90deg, #31688e 0%, #355f8d 25%, #433e85 50%, #46106a 75%, #440154 100%);"></div>
<div class="t" style="left:2128.3px;top:957.1px;width:145.5px;text-align:center;font-size:12.5px;line-height:14px;color:#262626;transform:scaleX(0.95);transform-origin:50% 0">house plant [4]</div>
<div style="position:absolute;left:2274.5px;top:974.1px;width:105.5px;height:105.5px;background:radial-gradient(2.6% 12% at 0% 48%, #fde725 0%, #bddf26 35%, rgba(189,223,38,0) 100%),linear-gradient(135deg, #39568c 0%, #31688e 30%, #3e4a89 55%, #46307e 75%, #440154 100%);"></div>
<div class="t" style="left:2254.5px;top:957.1px;width:145.5px;text-align:center;font-size:12.5px;line-height:14px;color:#262626;transform:scaleX(0.95);transform-origin:50% 0">leaf [5]</div>
<div style="position:absolute;left:2400.7px;top:974.1px;width:105.5px;height:105.5px;background:radial-gradient(30% 28% at 46% 27%, #bddf26 0%, #7ad151 25%, #44bf70 50%, rgba(68,191,112,0) 100%),radial-gradient(55% 50% at 46% 30%, #22a884 0%, #21918c 45%, rgba(33,145,140,0) 100%),radial-gradient(28% 42% at 0% 100%, #440154 0%, rgba(68,1,84,0) 100%),radial-gradient(28% 42% at 100% 100%, #440154 0%, rgba(68,1,84,0) 100%),radial-gradient(18% 18% at 100% 0%, #46327e 0%, rgba(70,50,126,0) 100%),radial-gradient(14% 14% at 0% 0%, #39568c 0%, rgba(57,86,140,0) 100%),linear-gradient(180deg, #31688e 0%, #2c718e 30%, #355f8d 60%, #414487 100%);"></div>
<div class="t" style="left:2380.7px;top:957.1px;width:145.5px;text-align:center;font-size:12.5px;line-height:14px;color:#262626;transform:scaleX(0.95);transform-origin:50% 0">palm tree [6]</div>
<div style="position:absolute;left:2526.9px;top:974.1px;width:105.5px;height:105.5px;background:radial-gradient(2.6% 12% at 0% 30%, #fde725 0%, #bddf26 35%, rgba(189,223,38,0) 100%),radial-gradient(25% 6% at 50% 0%, #21918c 0%, rgba(34,168,132,0) 100%),radial-gradient(30% 17% at 50% 30%, #433e85 0%, rgba(62,74,137,0.6) 50%, rgba(62,74,137,0) 100%),radial-gradient(26% 38% at 0% 88%, #440154 0%, rgba(68,1,84,0) 100%),radial-gradient(26% 38% at 100% 88%, #440154 0%, rgba(68,1,84,0) 100%),radial-gradient(14% 30% at 100% 25%, #46327e 0%, rgba(70,50,126,0) 100%),radial-gradient(14% 14% at 0% 0%, #46327e 0%, rgba(70,50,126,0) 100%),linear-gradient(180deg, #31688e 0%, #2c718e 35%, #355f8d 65%, #3e4a89 100%);"></div>
<div class="t" style="left:2506.9px;top:957.1px;width:145.5px;text-align:center;font-size:12.5px;line-height:14px;color:#262626;transform:scaleX(0.95);transform-origin:50% 0">tree [7]</div>
<div style="position:absolute;left:2684px;top:692px;width:548px;height:530px;box-sizing:border-box;border:2px solid #e7e8f0;border-radius:10px;background:#fefefe"></div>
<div class="t" style="left:2709.1px;top:733.9px;font-size:26px;line-height:26px;color:#5a6480;transform:scaleX(1.0578);">confusion-matrix-00798.png</div>
<svg style="position:absolute;left:2772px;top:790px;overflow:hidden" width="372" height="372" viewBox="0 0 100 100"><rect width="100" height="100" fill="#000"/><g fill="none" stroke="#a0a0a0" stroke-width="0.85" stroke-linecap="round" stroke-linejoin="round"><path d="M0.5,32.0C0.6,33.5 0.2,37.6 1.3,40.7C2.4,43.8 3.9,47.5 6.8,50.4C9.7,53.3 14.7,56.5 18.9,58.2C23.1,59.9 28.2,60.4 32.2,60.7C36.2,61.0 39.6,59.9 43.0,60.0C46.4,60.1 50.3,62.5 52.7,61.3C55.1,60.1 56.0,55.1 57.6,52.8C59.2,50.5 59.9,48.5 62.5,47.3C65.1,46.1 69.8,46.3 73.4,45.5C77.0,44.7 80.9,44.1 84.3,42.5C87.7,40.9 91.4,38.1 94.0,35.8C96.6,33.5 99.0,29.8 100.0,28.6"/><path d="M0.5,31.0C1.1,30.3 2.5,27.9 4.4,26.8C6.3,25.7 9.8,24.7 12.0,24.5C14.2,24.3 16.2,24.6 17.9,25.5C19.6,26.4 21.2,30.7 22.0,29.8C22.8,28.9 22.2,23.2 22.5,20.0C22.8,16.8 22.7,12.8 23.7,10.4C24.7,8.0 26.6,6.3 28.6,5.6C30.6,4.9 33.6,5.0 35.8,6.2C38.0,7.4 40.6,10.7 41.9,12.8C43.2,14.9 42.9,20.1 43.7,18.9C44.5,17.7 45.2,8.7 46.7,5.6C48.2,2.5 50.9,1.3 52.8,0.5C54.7,-0.3 56.7,0.1 58.0,0.8C59.3,1.6 60.0,2.1 60.5,5.0C61.0,7.9 60.6,18.0 61.3,18.3C62.0,18.6 63.1,9.3 64.9,6.8C66.7,4.3 70.0,3.6 72.2,3.4C74.4,3.2 77.3,2.4 78.2,5.6C79.1,8.8 77.0,21.1 77.6,22.5C78.2,23.9 79.9,16.2 81.8,14.1C83.7,12.0 86.7,9.8 89.1,9.8C91.5,9.8 94.6,12.1 96.4,14.0C98.2,15.9 99.4,20.1 100.0,21.3"/></g></svg>
<div class="t" style="left:2906.2px;top:1181.9px;font-size:26px;line-height:26px;color:#5a6480;transform:scaleX(1.0434);">step 652</div>
<div style="position:absolute;left:3252px;top:692px;width:548px;height:530px;box-sizing:border-box;border:2px solid #e7e8f0;border-radius:10px;background:#fefefe"></div>
<div class="t" style="left:3277.1px;top:733.9px;font-size:26px;line-height:26px;color:#5a6480;transform:scaleX(1.0578);">confusion-matrix-00797.png</div>
<svg style="position:absolute;left:3340px;top:790px;overflow:hidden" width="372" height="372" viewBox="0 0 100 100"><rect width="100" height="100" fill="#000"/><g fill="none" stroke="#a0a0a0" stroke-width="0.85" stroke-linecap="round" stroke-linejoin="round"><path d="M19.2,100.0C19.5,96.7 20.2,87.0 21.0,80.0C21.8,73.0 23.6,61.4 24.1,57.7"/><path d="M24.1,56.4C22.6,55.2 17.1,52.6 15.0,49.2C12.9,45.8 11.2,39.8 11.4,36.0C11.6,32.2 13.4,29.5 16.2,26.4C19.0,23.3 24.3,19.5 28.3,17.3C32.3,15.1 37.6,13.1 40.4,13.4C43.2,13.7 44.0,16.0 45.2,18.9C46.5,21.8 47.9,27.4 47.9,31.0C47.9,34.6 46.9,37.7 45.2,40.7C43.5,43.7 40.7,47.0 37.9,49.2C35.1,51.4 30.6,52.6 28.3,54.0C26.0,55.4 24.8,57.1 24.1,57.7"/><path d="M13.8,23.8C12.4,24.0 7.5,22.6 5.3,25.0C3.1,27.4 1.1,34.7 0.5,38.3C-0.1,41.9 0.7,45.2 1.7,46.8C2.7,48.4 4.9,48.6 6.5,48.0C8.1,47.4 10.6,44.0 11.4,43.2"/><path d="M13.3,23.8C13.8,21.8 14.9,14.5 16.4,11.7C17.9,8.9 20.6,7.5 22.4,6.9C24.2,6.3 26.2,7.0 27.3,8.0C28.4,9.0 28.7,12.0 29.0,12.8"/><path d="M29.6,12.8C30.2,11.8 31.2,8.9 33.2,6.9C35.2,4.9 38.9,1.6 41.8,0.7C44.6,-0.2 48.4,0.3 50.3,1.3C52.2,2.3 53.1,4.5 53.3,6.8C53.5,9.1 52.2,13.1 51.5,15.3C50.8,17.5 49.5,19.2 49.1,20.0"/><path d="M49.1,20.6C50.3,21.1 54.7,21.9 56.4,23.6C58.1,25.3 59.2,28.4 59.4,31.0C59.6,33.6 59.5,37.3 57.6,39.5C55.7,41.7 49.5,43.5 47.9,44.3"/><path d="M45.2,44.9C45.3,46.2 46.6,50.5 45.8,52.8C45.0,55.1 42.7,57.6 40.4,58.8C38.1,60.0 34.3,60.6 31.9,60.0C29.5,59.4 26.9,56.0 25.9,55.2"/></g></svg>
<div class="t" style="left:3466.2px;top:1181.9px;font-size:26px;line-height:26px;color:#5a6480;transform:scaleX(1.0506);">step 1242</div>
<div style="position:absolute;left:412px;top:1242px;width:548px;height:540px;box-sizing:border-box;border:2px solid #e7e8f0;border-radius:10px;background:#fefefe"></div>
<div class="t" style="left:437.1px;top:1283.9px;font-size:26px;line-height:26px;color:#5a6480;transform:scaleX(1.0578);">confusion-matrix-00796.png</div>
<svg style="position:absolute;left:500px;top:1340px;overflow:hidden" width="372" height="372" viewBox="0 0 100 100"><rect width="100" height="100" fill="#000"/><g fill="none" stroke="#a0a0a0" stroke-width="0.85" stroke-linecap="round" stroke-linejoin="round"><path d="M0.3,29.4C0.3,27.2 -0.4,19.2 0.2,16.1C0.8,13.0 2.2,11.9 3.8,10.9C5.4,9.9 7.9,9.1 9.9,9.9C11.9,10.7 13.9,16.3 15.6,15.6C17.3,14.9 18.1,8.3 20.2,5.8C22.3,3.3 26.2,1.3 28.4,0.5C30.6,-0.3 30.9,-0.3 33.5,0.9C36.0,2.1 41.6,5.6 43.7,7.9C45.8,10.2 44.9,15.0 46.3,14.5C47.7,14.0 49.9,7.0 51.9,4.8C53.9,2.6 56.0,1.6 58.0,1.2C60.0,0.8 61.6,0.8 64.2,2.3C66.8,3.8 71.8,8.4 73.4,9.9C75.0,11.4 73.2,12.4 73.9,11.5C74.6,10.6 76.0,5.8 77.5,4.3C79.0,2.8 80.7,2.5 82.6,2.8C84.5,3.0 86.3,3.7 88.7,5.8C91.1,7.8 95.1,11.3 96.9,15.1C98.7,18.9 99.1,24.8 99.5,28.4C99.9,32.0 100.3,34.5 99.5,36.5C98.7,38.5 97.0,39.4 94.9,40.6C92.8,41.8 91.5,42.8 86.7,43.7C81.9,44.7 73.1,46.0 66.3,46.3C59.5,46.5 52.5,45.6 45.7,45.2C38.9,44.8 31.8,44.4 25.3,43.7C18.8,43.0 10.5,41.8 6.9,41.1C3.3,40.4 4.9,41.6 3.8,39.6C2.7,37.6 0.9,31.1 0.3,29.4"/></g></svg>
<div class="t" style="left:634.2px;top:1731.9px;font-size:26px;line-height:26px;color:#5a6480;transform:scaleX(1.0434);">step 652</div>
<div style="position:absolute;left:980px;top:1242px;width:548px;height:540px;box-sizing:border-box;border:2px solid #e7e8f0;border-radius:10px;background:#fefefe"></div>
<div class="t" style="left:1005.1px;top:1283.9px;font-size:26px;line-height:26px;color:#5a6480;transform:scaleX(1.0578);">confusion-matrix-00795.png</div>
<svg style="position:absolute;left:1068px;top:1340px;overflow:hidden" width="372" height="372" viewBox="0 0 100 100"><rect width="100" height="100" fill="#000"/><g fill="none" stroke="#a0a0a0" stroke-width="0.85" stroke-linecap="round" stroke-linejoin="round"><path d="M10.6,99.5C12.0,98.2 16.1,95.3 18.8,91.8C21.5,88.3 25.1,82.8 27.0,78.5C28.9,74.2 29.4,70.3 30.1,66.2C30.8,62.1 30.9,56.0 31.1,53.9"/><path d="M41.9,98.5C41.3,94.8 39.5,82.7 38.3,76.5C37.1,70.3 35.0,65.5 34.7,61.1C34.4,56.6 36.0,51.7 36.3,49.8"/><path d="M31.1,53.9C29.9,54.4 26.6,56.5 24.0,57.0C21.4,57.5 17.7,57.5 15.8,57.0C13.9,56.5 13.0,54.8 12.8,53.9C12.6,53.0 14.0,52.2 14.8,51.4C15.7,50.5 17.4,49.2 17.9,48.8"/><path d="M12.8,53.9C12.3,53.9 11.2,54.4 9.7,53.9C8.2,53.4 5.2,52.8 3.6,50.9C2.1,49.0 0.4,45.3 0.4,42.7C0.4,40.1 1.6,38.1 3.5,35.5C5.4,32.9 9.2,28.7 11.6,27.3C14.0,25.9 17.1,27.0 17.8,27.3C18.5,27.6 16.8,29.4 15.8,29.4C14.8,29.4 12.6,28.8 11.6,27.3C10.6,25.8 9.2,22.8 9.6,20.2C10.0,17.6 11.4,14.7 13.8,12.0C16.2,9.3 20.6,5.8 24.0,3.8C27.4,1.8 31.5,0.5 34.2,0.2C36.9,-0.1 38.3,0.0 40.3,1.8C42.3,3.6 44.5,9.8 46.0,10.9C47.5,12.0 46.9,8.7 49.5,8.4C52.1,8.1 58.9,8.3 61.8,8.9C64.7,9.5 65.0,9.5 67.0,11.9C69.0,14.3 72.6,20.4 74.1,23.2C75.5,25.9 75.9,26.3 75.7,28.4C75.5,30.4 74.6,34.1 73.1,35.5C71.6,36.9 69.0,36.7 66.9,36.5C64.9,36.3 61.0,34.1 60.8,34.5C60.6,34.9 64.9,36.0 65.9,38.6C66.9,41.2 67.2,47.0 66.9,49.9C66.6,52.8 65.6,54.8 63.9,56.0C62.2,57.2 59.3,57.2 56.8,57.0C54.3,56.8 51.3,56.1 48.9,55.0C46.5,53.9 43.5,51.2 42.4,50.4"/><path d="M31.1,46.8C31.9,47.0 34.4,47.9 36.0,48.0C37.6,48.1 40.1,47.4 40.9,47.3"/></g></svg>
<div class="t" style="left:1194.2px;top:1731.9px;font-size:26px;line-height:26px;color:#5a6480;transform:scaleX(1.0506);">step 1242</div>
<div style="position:absolute;left:1548px;top:1242px;width:548px;height:540px;box-sizing:border-box;border:2px solid #e7e8f0;border-radius:10px;background:#fefefe"></div>
<div class="t" style="left:1573.1px;top:1283.9px;font-size:26px;line-height:26px;color:#5a6480;transform:scaleX(1.0578);">confusion-matrix-00793.png</div>
<svg style="position:absolute;left:1636px;top:1340px;overflow:hidden" width="372" height="372" viewBox="0 0 100 100"><rect width="100" height="100" fill="#000"/><g fill="none" stroke="#a0a0a0" stroke-width="0.85" stroke-linecap="round" stroke-linejoin="round"><path d="M0.3,55.0C1.4,56.5 4.7,62.0 7.0,64.2C9.3,66.4 12.2,68.0 14.1,68.3C16.0,68.6 17.6,68.9 18.2,66.2C18.8,63.5 18.0,55.6 17.7,51.9C17.4,48.1 16.3,49.0 16.1,43.7C15.9,38.4 16.2,26.3 16.7,20.2C17.2,14.1 18.3,10.2 19.2,6.9C20.1,3.6 20.4,1.3 22.3,0.2C24.2,-0.9 28.1,-0.1 30.5,0.5C32.9,1.1 35.1,2.2 36.6,3.8C38.1,5.4 39.2,6.8 39.7,9.9C40.2,13.0 40.2,18.8 39.7,22.2C39.2,25.6 37.5,27.3 36.6,30.4C35.8,33.5 34.8,37.7 34.6,40.6C34.4,43.5 34.9,46.2 35.6,47.8C36.3,49.4 36.4,49.9 38.6,50.3C40.8,50.7 46.5,51.4 48.9,50.3C51.3,49.2 51.6,46.2 53.0,43.7C54.4,41.2 56.8,38.9 57.1,35.5C57.4,32.1 55.2,26.3 55.0,23.2C54.8,20.1 55.1,17.8 56.0,16.6C56.9,15.4 58.1,14.8 60.1,16.1C62.1,17.4 66.7,21.1 68.3,24.3C69.9,27.5 69.8,31.9 69.8,35.5C69.8,39.1 69.8,42.6 68.3,45.7C66.8,48.8 64.0,51.7 61.1,53.9C58.2,56.1 53.8,57.0 50.9,59.0C48.0,61.0 45.5,63.3 43.8,66.2C42.1,69.1 41.6,73.1 40.7,76.5C39.8,79.9 39.4,82.9 38.6,86.7C37.8,90.5 36.5,97.4 36.1,99.5"/></g></svg>
<div class="t" style="left:1762.2px;top:1731.9px;font-size:26px;line-height:26px;color:#5a6480;transform:scaleX(1.0506);">step 1242</div>
<div style="position:absolute;left:2116px;top:1242px;width:548px;height:540px;box-sizing:border-box;border:2px solid #e7e8f0;border-radius:10px;background:#fefefe"></div>
<div class="t" style="left:2141.1px;top:1283.9px;font-size:26px;line-height:26px;color:#5a6480;transform:scaleX(1.0578);">confusion-matrix-00791.png</div>
<svg style="position:absolute;left:2204px;top:1340px;overflow:hidden" width="372" height="372" viewBox="0 0 100 100"><rect width="100" height="100" fill="#000"/><g fill="none" stroke="#a0a0a0" stroke-width="0.85" stroke-linecap="round" stroke-linejoin="round"><path d="M21.0,0.2C25.3,0.3 41.8,-0.6 46.6,0.7C51.4,2.0 48.9,5.6 49.6,8.0C50.3,10.4 51.0,11.5 50.6,15.1C50.2,18.7 47.0,26.4 47.5,29.4C48.0,32.4 51.2,32.5 53.6,32.9C56.0,33.3 59.8,31.4 61.9,32.0C64.0,32.6 65.5,34.2 66.0,36.5C66.5,38.8 66.2,41.2 65.0,45.8C63.8,50.4 59.9,58.1 58.9,64.2C57.9,70.3 59.2,78.5 58.9,82.6C58.6,86.7 57.2,87.7 56.9,88.7"/><path d="M21.0,0.2C21.0,0.8 20.5,1.8 21.0,3.8C21.5,5.8 23.4,8.8 24.1,12.0C24.8,15.2 25.3,20.3 25.1,23.2C24.9,26.1 24.0,27.9 23.1,29.4C22.2,30.9 21.2,32.2 20.0,32.4C18.8,32.6 16.8,31.9 15.9,30.4C15.1,28.9 16.4,25.2 14.9,23.2C13.4,21.1 9.1,18.8 6.7,18.1C4.3,17.4 1.5,16.2 0.5,19.1C-0.5,22.0 0.1,30.6 0.5,35.5C0.9,40.5 1.4,44.9 2.6,48.8C3.8,52.7 3.8,57.2 7.7,59.1C11.6,61.0 22.7,57.5 26.1,60.1C29.5,62.7 27.9,70.0 28.1,74.4C28.3,78.8 27.7,82.5 27.1,86.7C26.5,90.9 25.0,97.4 24.6,99.5"/><path d="M11.3,80.0L23.5,84.1"/></g></svg>
<div class="t" style="left:2330.2px;top:1731.9px;font-size:26px;line-height:26px;color:#5a6480;transform:scaleX(1.0506);">step 1242</div>
<div style="position:absolute;left:2684px;top:1242px;width:548px;height:540px;box-sizing:border-box;border:2px solid #e7e8f0;border-radius:10px;background:#fefefe"></div>
<div class="t" style="left:2709.1px;top:1283.9px;font-size:26px;line-height:26px;color:#5a6480;transform:scaleX(1.0578);">confusion-matrix-00789.png</div>
<svg style="position:absolute;left:2772px;top:1340px;overflow:hidden" width="372" height="372" viewBox="0 0 100 100"><rect width="100" height="100" fill="#000"/><g fill="none" stroke="#a0a0a0" stroke-width="0.85" stroke-linecap="round" stroke-linejoin="round"><path d="M0.3,34.0C0.3,33.1 -0.5,30.5 0.3,28.4C1.1,26.3 2.6,23.6 4.9,21.2C7.2,18.8 11.4,15.9 14.1,14.0C16.8,12.1 19.7,10.6 20.8,9.9"/><path d="M20.3,9.9C18.9,10.4 14.9,12.5 12.1,13.0C9.3,13.5 4.8,13.6 3.4,13.0C1.9,12.4 1.4,11.0 3.4,9.4C5.3,7.8 12.7,4.0 15.1,3.3C17.5,2.6 16.8,5.2 17.7,5.3C18.6,5.4 15.3,4.0 20.3,3.8C25.3,3.5 41.2,4.3 47.9,3.8C54.5,3.3 57.1,1.2 60.2,0.7C63.3,0.2 63.4,0.4 66.3,0.7C69.2,1.0 76.4,1.3 77.6,2.3C78.8,3.3 73.0,5.6 73.5,6.9C74.0,8.2 76.4,8.0 80.7,9.9C85.0,11.9 98.2,16.9 99.6,18.6C101.0,20.3 91.0,19.9 88.9,20.2C86.8,20.5 86.9,20.1 86.8,20.7C86.7,21.3 90.0,23.5 88.3,23.8C86.6,24.1 81.3,22.3 76.6,22.7C71.9,23.1 64.6,25.2 60.2,26.3C55.8,27.4 51.7,28.9 50.0,29.4"/><path d="M63.3,11.5C60.9,14.1 51.9,22.8 48.9,27.3C45.9,31.8 45.9,35.4 45.4,38.6C44.9,41.9 44.8,44.5 45.9,46.8C47.0,49.1 50.0,51.8 52.0,52.4C54.0,53.0 56.7,50.7 57.6,50.4"/><path d="M31.5,16.1C32.4,16.6 35.6,14.5 36.6,19.1C37.6,23.7 37.5,38.6 37.2,43.7C36.9,48.8 36.3,48.2 34.6,49.9C32.9,51.6 28.2,53.2 26.9,53.9"/><path d="M0.3,34.0C3.1,33.8 11.0,33.8 17.2,33.0C23.4,32.2 33.9,30.0 37.2,29.4"/></g></svg>
<div class="t" style="left:2906.2px;top:1731.9px;font-size:26px;line-height:26px;color:#5a6480;transform:scaleX(1.0434);">step 652</div>
<div style="position:absolute;left:3252px;top:1242px;width:548px;height:540px;box-sizing:border-box;border:2px solid #e7e8f0;border-radius:10px;background:#fefefe"></div>
<div class="t" style="left:3277.1px;top:1283.9px;font-size:26px;line-height:26px;color:#5a6480;transform:scaleX(1.0578);">confusion-matrix-00789.png</div>
<svg style="position:absolute;left:3340px;top:1340px;overflow:hidden" width="372" height="372" viewBox="0 0 100 100"><rect width="100" height="100" fill="#000"/><g fill="none" stroke="#a0a0a0" stroke-width="0.85" stroke-linecap="round" stroke-linejoin="round"><path d="M0.3,34.0C0.3,33.1 -0.5,30.5 0.3,28.4C1.1,26.3 2.6,23.6 4.9,21.2C7.2,18.8 11.4,15.9 14.1,14.0C16.8,12.1 19.7,10.6 20.8,9.9"/><path d="M20.3,9.9C18.9,10.4 14.9,12.5 12.1,13.0C9.3,13.5 4.8,13.6 3.4,13.0C1.9,12.4 1.4,11.0 3.4,9.4C5.3,7.8 12.7,4.0 15.1,3.3C17.5,2.6 16.8,5.2 17.7,5.3C18.6,5.4 15.3,4.0 20.3,3.8C25.3,3.5 41.2,4.3 47.9,3.8C54.5,3.3 57.1,1.2 60.2,0.7C63.3,0.2 63.4,0.4 66.3,0.7C69.2,1.0 76.4,1.3 77.6,2.3C78.8,3.3 73.0,5.6 73.5,6.9C74.0,8.2 76.4,8.0 80.7,9.9C85.0,11.9 98.2,16.9 99.6,18.6C101.0,20.3 91.0,19.9 88.9,20.2C86.8,20.5 86.9,20.1 86.8,20.7C86.7,21.3 90.0,23.5 88.3,23.8C86.6,24.1 81.3,22.3 76.6,22.7C71.9,23.1 64.6,25.2 60.2,26.3C55.8,27.4 51.7,28.9 50.0,29.4"/><path d="M63.3,11.5C60.9,14.1 51.9,22.8 48.9,27.3C45.9,31.8 45.9,35.4 45.4,38.6C44.9,41.9 44.8,44.5 45.9,46.8C47.0,49.1 50.0,51.8 52.0,52.4C54.0,53.0 56.7,50.7 57.6,50.4"/><path d="M31.5,16.1C32.4,16.6 35.6,14.5 36.6,19.1C37.6,23.7 37.5,38.6 37.2,43.7C36.9,48.8 36.3,48.2 34.6,49.9C32.9,51.6 28.2,53.2 26.9,53.9"/><path d="M0.3,34.0C3.1,33.8 11.0,33.8 17.2,33.0C23.4,32.2 33.9,30.0 37.2,29.4"/></g></svg>
<div class="t" style="left:3466.2px;top:1731.9px;font-size:26px;line-height:26px;color:#5a6480;transform:scaleX(1.0506);">step 1242</div>
<div style="position:absolute;left:412px;top:1802px;width:548px;height:600px;box-sizing:border-box;border:2px solid #e7e8f0;border-radius:10px;background:#fefefe"></div>
<div class="t" style="left:437.1px;top:1843.9px;font-size:26px;line-height:26px;color:#5a6480;transform:scaleX(1.0578);">confusion-matrix-00788.png</div>
<svg style="position:absolute;left:500px;top:1900px;overflow:hidden" width="372" height="372" viewBox="0 0 100 100"><rect width="100" height="100" fill="#000"/><g fill="none" stroke="#a0a0a0" stroke-width="0.85" stroke-linecap="round" stroke-linejoin="round"><path d="M0.3,1.1C2.0,3.8 6.2,11.7 10.6,17.4C15.0,23.1 20.8,29.1 26.7,35.2C32.6,41.3 39.6,49.7 46.0,54.2C52.4,58.7 57.8,60.6 65.3,62.2C72.8,63.8 85.3,62.4 90.9,63.8C96.5,65.1 97.7,69.2 99.0,70.3"/><path d="M0.3,0.5C5.5,0.7 22.5,-0.1 31.5,1.9C40.5,3.9 47.3,8.0 54.0,12.4C60.7,16.8 66.6,23.0 71.7,28.4C76.8,33.8 81.4,39.9 84.6,44.5C87.8,49.1 89.8,52.8 91.0,55.8C92.2,58.8 91.7,61.1 91.8,62.2"/><path d="M34.7,27.7C36.9,28.5 40.9,28.9 47.6,32.5C54.3,36.1 66.4,43.4 75.0,49.4C83.6,55.4 95.0,65.5 99.0,68.7"/><path d="M34.7,27.7L50.0,22.8"/><path d="M51.6,47.0L53.2,53.4"/><path d="M67.7,50.2L75.0,50.2"/></g></svg>
<div style="position:absolute;left:980px;top:1802px;width:548px;height:600px;box-sizing:border-box;border:2px solid #e7e8f0;border-radius:10px;background:#fefefe"></div>
<div class="t" style="left:1005.1px;top:1843.9px;font-size:26px;line-height:26px;color:#5a6480;transform:scaleX(1.0578);">confusion-matrix-00787.png</div>
<svg style="position:absolute;left:1068px;top:1900px;overflow:hidden" width="372" height="372" viewBox="0 0 100 100"><rect width="100" height="100" fill="#000"/><g fill="none" stroke="#a0a0a0" stroke-width="0.85" stroke-linecap="round" stroke-linejoin="round"><path d="M5.8,0.5C6.6,1.3 8.2,5.0 10.6,5.1C13.0,5.2 16.8,1.4 20.3,1.1C23.8,0.8 27.9,2.7 31.5,3.5C35.1,4.3 40.1,4.8 42.0,6.0C43.9,7.2 44.8,9.2 42.8,10.8C40.8,12.4 34.0,14.9 30.0,15.6C26.0,16.3 23.2,14.8 18.6,14.8C14.0,14.8 5.7,16.5 2.6,15.6C-0.5,14.7 -0.3,11.7 0.2,9.2C0.7,6.7 4.9,1.9 5.8,0.5"/><path d="M19.5,12.4C19.7,15.3 20.2,23.3 20.5,30.0C20.8,36.7 21.0,48.8 21.1,52.6"/><path d="M26.7,56.6C27.2,53.0 27.6,41.6 29.9,34.9C32.2,28.2 38.2,17.7 40.4,16.4C42.5,15.1 41.3,24.2 42.8,27.0C44.3,29.8 46.2,32.2 49.2,33.3C52.2,34.3 57.3,35.3 60.5,33.3C63.7,31.3 69.0,25.3 68.5,21.2C68.0,17.1 61.0,10.4 57.2,8.4C53.5,6.4 48.4,8.8 46.0,9.2C43.6,9.6 43.3,10.5 42.8,10.8"/><path d="M2.6,47.7C3.4,46.6 4.5,42.5 7.4,41.3C10.3,40.1 16.3,40.2 20.3,40.5C24.3,40.8 28.0,41.4 31.5,42.9C35.0,44.4 39.5,47.8 41.2,49.4C43.0,51.0 44.4,51.0 42.0,52.6C39.6,54.2 29.8,57.3 26.7,59.0C23.6,60.7 25.9,62.5 23.5,63.0C21.1,63.5 15.4,63.4 12.2,62.2C9.0,61.0 5.8,58.2 4.2,55.8C2.6,53.4 2.9,49.1 2.6,47.7"/><path d="M3.4,54.2L2.6,75.0"/><path d="M41.2,51.0L41.2,75.0"/></g></svg>
<div style="position:absolute;left:1548px;top:1802px;width:548px;height:600px;box-sizing:border-box;border:2px solid #e7e8f0;border-radius:10px;background:#fefefe"></div>
<div class="t" style="left:1573.1px;top:1843.9px;font-size:26px;line-height:26px;color:#5a6480;transform:scaleX(1.0578);">confusion-matrix-00786.png</div>
<svg style="position:absolute;left:1636px;top:1900px;overflow:hidden" width="372" height="372" viewBox="0 0 100 100"><rect width="100" height="100" fill="#000"/><g fill="none" stroke="#a0a0a0" stroke-width="0.85" stroke-linecap="round" stroke-linejoin="round"><path d="M15.4,34.9C16.8,35.4 20.6,35.7 23.5,38.1C26.4,40.5 31.2,43.2 33.1,49.4C35.0,55.5 34.4,70.7 34.7,75.0"/><path d="M24.3,36.5C24.7,34.6 25.0,27.9 26.7,25.2C28.4,22.5 32.6,21.5 34.7,20.4C36.8,19.3 37.6,19.6 39.5,18.8C41.4,18.0 44.3,15.7 45.9,15.6C47.5,15.5 45.7,18.9 49.2,18.0C52.7,17.1 61.5,12.9 66.9,10.0C72.3,7.1 78.7,0.3 81.4,0.3C84.1,0.3 81.7,8.0 83.0,10.0C84.3,12.0 87.3,10.1 89.4,12.4C91.5,14.7 94.7,20.7 95.8,23.6C96.9,26.5 97.1,27.1 95.8,30.0C94.5,33.0 93.4,37.9 87.8,41.3C82.2,44.7 68.7,48.3 62.0,50.2C55.3,52.1 52.0,51.9 47.5,52.6C43.0,53.3 36.8,53.9 34.7,54.2"/><path d="M33.1,51.0C34.2,46.3 34.1,27.4 39.5,22.8C44.9,18.2 61.5,19.2 65.3,23.6C69.0,28.0 62.8,40.8 62.0,49.4C61.2,58.0 61.0,70.7 60.8,75.0"/><path d="M37.9,18.8L42.8,26.0"/></g></svg>
<div style="position:absolute;left:2116px;top:1802px;width:548px;height:600px;box-sizing:border-box;border:2px solid #e7e8f0;border-radius:10px;background:#fefefe"></div>
<div class="t" style="left:2141.1px;top:1843.9px;font-size:26px;line-height:26px;color:#5a6480;transform:scaleX(1.0578);">confusion-matrix-00785.png</div>
<svg style="position:absolute;left:2204px;top:1900px;overflow:hidden" width="372" height="372" viewBox="0 0 100 100"><rect width="100" height="100" fill="#000"/><g fill="none" stroke="#a0a0a0" stroke-width="0.85" stroke-linecap="round" stroke-linejoin="round"><path d="M27.0,23.6C25.5,22.8 21.6,21.1 18.2,18.8C14.8,16.5 9.6,11.1 6.9,10.0C4.2,8.9 3.2,9.6 2.1,12.4C1.0,15.2 -0.0,23.3 0.5,26.8C1.0,30.3 1.0,31.7 5.3,33.3C9.6,34.9 21.2,35.7 26.2,36.5C31.1,37.3 33.5,37.8 35.0,38.1"/><path d="M27.8,15.6L27.0,51.8"/><path d="M27.8,15.6C29.4,13.6 34.5,6.0 37.5,3.5C40.5,1.0 43.4,0.8 45.5,0.8C47.6,0.8 48.1,-1.9 50.3,3.5C52.4,8.9 57.2,24.8 58.4,33.3C59.6,41.8 58.3,51.0 57.6,54.2C56.9,57.4 54.8,52.9 54.3,52.6"/><path d="M56.8,18.8C61.1,16.4 76.1,6.8 82.5,4.3C88.9,1.7 92.5,3.0 95.3,3.5C98.1,4.0 98.9,5.3 99.4,7.6C100.0,9.9 101.1,13.3 98.6,17.2C96.0,21.1 89.5,27.5 84.1,30.9C78.7,34.2 71.5,36.1 66.4,37.3C61.3,38.5 55.6,38.0 53.5,38.1"/><path d="M84.1,30.9L99.4,39.7"/><path d="M64.8,41.3L74.4,49.4"/><path d="M91.3,9.2L95.3,6.8"/></g></svg>
<div style="position:absolute;left:2684px;top:1802px;width:548px;height:600px;box-sizing:border-box;border:2px solid #e7e8f0;border-radius:10px;background:#fefefe"></div>
<div class="t" style="left:2709.1px;top:1843.9px;font-size:26px;line-height:26px;color:#5a6480;transform:scaleX(1.0578);">confusion-matrix-00784.png</div>
<svg style="position:absolute;left:2772px;top:1900px;overflow:hidden" width="372" height="372" viewBox="0 0 100 100"><rect width="100" height="100" fill="#000"/><g fill="none" stroke="#a0a0a0" stroke-width="0.85" stroke-linecap="round" stroke-linejoin="round"><path d="M0.5,17.2C1.6,15.6 4.8,10.3 6.9,7.6C9.0,4.9 10.3,1.9 13.3,0.8C16.2,-0.3 20.4,-0.4 24.6,1.1C28.8,2.6 35.5,7.1 38.3,10.0C41.1,12.9 39.9,18.3 41.5,18.8C43.1,19.3 44.5,14.1 47.9,13.2C51.2,12.3 57.7,12.7 61.6,13.2C65.5,13.7 68.8,14.9 71.2,16.4C73.6,17.9 74.9,19.2 76.0,22.0C77.1,24.8 77.2,29.5 77.6,33.3C78.0,37.0 79.3,44.2 78.5,44.5C77.7,44.8 75.1,38.5 72.8,34.9C70.5,31.3 67.8,25.3 64.8,22.8C61.8,20.3 58.0,19.8 55.1,20.1C52.2,20.4 48.7,21.9 47.1,24.4C45.5,26.9 45.2,30.7 45.5,34.9C45.8,39.1 48.0,45.4 48.7,49.4C49.4,53.4 49.8,54.7 49.5,59.0C49.2,63.3 47.5,72.3 47.1,75.0"/><path d="M13.3,15.6C15.2,16.1 21.4,16.4 24.6,18.8C27.8,21.2 30.5,25.0 32.6,30.1C34.8,35.2 37.0,41.9 37.5,49.4C38.0,56.9 36.2,70.7 35.9,75.0"/></g></svg>
<div style="position:absolute;left:3252px;top:1802px;width:548px;height:600px;box-sizing:border-box;border:2px solid #e7e8f0;border-radius:10px;background:#fefefe"></div>
<div class="t" style="left:3277.1px;top:1843.9px;font-size:26px;line-height:26px;color:#5a6480;transform:scaleX(1.0578);">confusion-matrix-00783.png</div>
<svg style="position:absolute;left:3340px;top:1900px;overflow:hidden" width="372" height="372" viewBox="0 0 100 100"><rect width="100" height="100" fill="#000"/><g fill="none" stroke="#a0a0a0" stroke-width="0.85" stroke-linecap="round" stroke-linejoin="round"><path d="M0.5,34.9C0.6,33.0 0.8,26.0 1.3,23.6C1.8,21.2 -1.0,23.9 3.7,20.4C8.4,16.9 24.6,5.2 29.4,2.7C34.2,0.2 27.2,4.4 32.6,5.1C38.0,5.8 54.9,7.5 61.6,6.8C68.3,6.1 68.5,1.9 72.8,1.1C77.1,0.3 84.2,0.7 87.3,2.0C90.4,3.3 89.3,6.8 91.3,9.2C93.3,11.6 98.1,13.2 99.4,16.4C100.8,19.6 100.1,25.4 99.4,28.5C98.7,31.6 97.6,32.9 95.3,34.9C93.0,36.9 88.9,39.2 85.7,40.5C82.5,41.8 80.3,42.6 76.0,42.9C71.7,43.2 64.8,41.6 60.0,42.1C55.2,42.6 49.8,44.9 47.1,46.1C44.4,47.3 44.6,47.2 43.9,49.4C43.2,51.5 44.2,56.6 43.1,59.0C42.0,61.4 39.5,63.3 37.5,63.8C35.5,64.3 34.3,65.0 31.2,62.2C28.1,59.4 21.1,49.5 19.1,46.9"/><path d="M0.5,34.9C0.9,35.2 2.2,34.6 2.9,36.5C3.6,38.4 3.6,43.1 4.5,46.1C5.4,49.1 7.0,53.9 8.5,54.2C10.0,54.5 12.5,48.8 13.3,47.7"/><path d="M43.9,38.1L58.4,69.5"/></g></svg>
</body></html>
